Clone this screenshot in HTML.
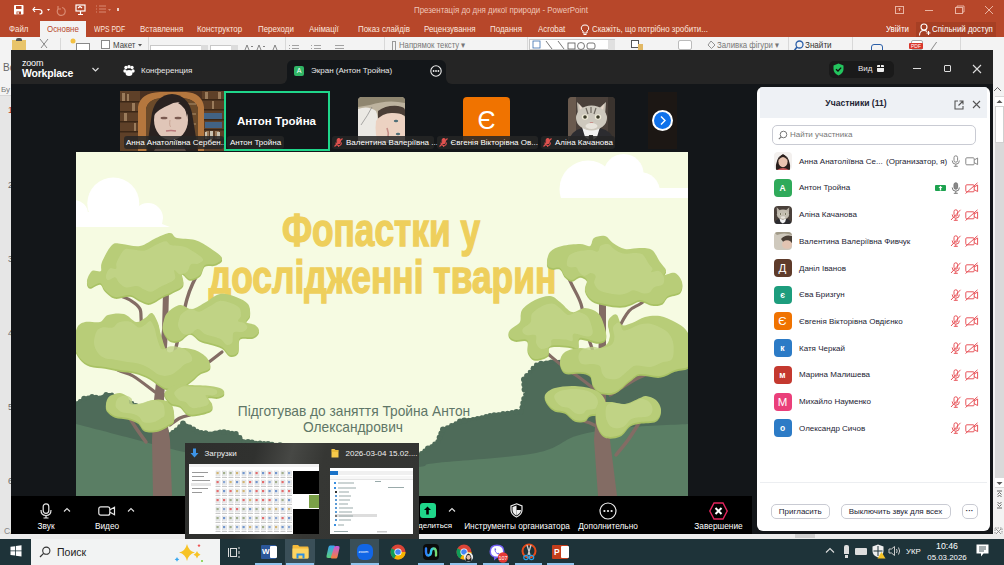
<!DOCTYPE html>
<html><head><meta charset="utf-8">
<style>
*{margin:0;padding:0;box-sizing:border-box}
html,body{width:1004px;height:565px;overflow:hidden;background:#f3f3f3;font-family:"Liberation Sans",sans-serif;position:relative}
.a{position:absolute}
.t{position:absolute;white-space:nowrap;line-height:1}
svg{position:absolute;overflow:visible}
.tab{position:absolute;top:24.5px;font-size:9px;transform:scaleX(.88);transform-origin:0 0;color:#fbe6df;white-space:nowrap;line-height:1}
.rb{position:absolute;top:43px;font-size:8.5px;color:#555;white-space:nowrap;line-height:1}
.pn{position:absolute;left:8px;font-size:9px;color:#666;line-height:1}
.tn{position:absolute;font-size:8.3px;color:#fff;white-space:nowrap;line-height:1}
.lbl{position:absolute;height:12.5px;background:rgba(38,38,38,.85);border-radius:3px;color:#fff;font-size:8px;line-height:14px;padding:0 3px;white-space:nowrap}
.pr{position:absolute;left:0;width:233px;height:27px}
.pr .av{position:absolute;left:16px;top:5px;width:18px;height:18px;border-radius:4px;color:#fff;font-size:9px;font-weight:bold;text-align:center;line-height:18px}
.pr .nm{position:absolute;left:42px;top:9px;font-size:8.2px;color:#222;white-space:nowrap;line-height:1}
.tbl{position:absolute;top:472px;font-size:8.3px;color:#fff;white-space:nowrap;line-height:1;transform:translateX(-50%)}
.ul{position:absolute;top:563px;height:2px;background:#8fc3ec}
</style></head><body>
<!-- ===== PowerPoint chrome ===== -->
<div class="a" style="left:0;top:0;width:1004px;height:37px;background:#b7472a"></div>
<div class="a" style="left:40px;top:21px;width:46px;height:17px;background:#f3f3f3"></div>
<div class="tab" style="left:9px">Файл</div>
<div class="tab" style="left:47px;color:#b7472a">Основне</div>
<div class="tab" style="left:94px;transform:scaleX(.76)">WPS PDF</div>
<div class="tab" style="left:140px">Вставлення</div>
<div class="tab" style="left:197px">Конструктор</div>
<div class="tab" style="left:258px">Переходи</div>
<div class="tab" style="left:309px">Анімації</div>
<div class="tab" style="left:358px">Показ слайдів</div>
<div class="tab" style="left:424px">Рецензування</div>
<div class="tab" style="left:490px">Подання</div>
<div class="tab" style="left:538px">Acrobat</div>
<div class="tab" style="left:592px">Скажіть, що потрібно зробити...</div>
<div class="tab" style="left:886px;color:#fff">Увійти</div>
<div class="a" style="left:916px;top:22px;width:80px;height:15px;background:#a63f24"></div>
<div class="tab" style="left:932px;color:#fff">Спільний доступ</div>
<div class="t" style="left:414px;top:5.5px;font-size:9px;color:#f0c6b8;transform:scaleX(.88);transform-origin:0 0">Презентація до дня дикої природи - PowerPoint</div>
<!-- QAT icons -->
<svg style="left:0;top:0" width="120" height="20">
 <g fill="none" stroke="#fff" stroke-width="1.2">
  
  <path d="M35 7 L33 9.5 L35 12 M33.2 9.5 H39 Q42 9.5 42 12 Q42 14 39.5 14"/>
  <path d="M62 7.5 A4 4 0 1 1 58.5 8.5 M58 6 V9 H61" stroke="#d98a72"/>
  <rect x="76" y="5" width="9" height="6"/><path d="M80.5 11 V14 M78 14.5 H83 M78 8 L80 6.5 L82 8"/>
  <path d="M96 6h1M96 9h1M96 12h1M99 6h7M99 9h7M99 12h7" stroke="#d98a72"/>
 </g>
 <path d="M47 9 L50 9 L48.5 11 Z" fill="#fff"/><rect x="14" y="5" width="9.5" height="9.5" rx=".8" fill="#fff"/><rect x="16" y="6" width="5.5" height="3" fill="#b7472a"/><rect x="16.5" y="11.5" width="4.5" height="3" fill="#b7472a"/><rect x="17.5" y="12" width="1.2" height="2" fill="#fff"/>
 <path d="M108 9 L111 9 L109.5 11 Z" fill="#d98a72"/>
 <path d="M118 8 v3" stroke="#fff" stroke-width="1.5"/>
</svg>
<!-- lightbulb -->
<svg style="left:580px;top:24px" width="10" height="12"><g fill="none" stroke="#fff" stroke-width="1"><path d="M5 1 A3.2 3.2 0 0 1 7 7 V9 H3 V7 A3.2 3.2 0 0 1 5 1Z"/><path d="M3.5 10.5 H6.5"/></g></svg>
<!-- person icon -->
<svg style="left:919px;top:23px" width="12" height="13"><g fill="none" stroke="#fff" stroke-width="1.1"><circle cx="5" cy="4" r="3"/><path d="M0.5 12.5 Q0.5 7.5 5 7.5 Q7 7.5 8 8.5 M9.5 8 V12 M7.5 10 H11.5"/></g></svg>
<!-- title bar window buttons -->
<svg style="left:890px;top:2px" width="110" height="16"><g fill="none" stroke="#e9b3a2" stroke-width="1"><rect x="5.5" y="4.5" width="8" height="7"/><path d="M9.5 6 v3 M8 7.5 L9.5 6 L11 7.5"/><path d="M35 8.5 h8"/><rect x="65.5" y="5.5" width="7" height="6"/><path d="M67 5.5 v-1.5 h7 v6 h-1.5"/><path d="M95 4 l8 8 M103 4 l-8 8"/></g></svg>
<!-- ribbon strip -->
<div class="a" style="left:0;top:37px;width:1004px;height:13px;background:#f3f3f3"></div>
<div class="a" style="left:12px;top:40px;width:14px;height:10px;background:#e8c46a"></div>
<div class="a" style="left:16px;top:38px;width:6px;height:3px;background:#555;border-radius:2px 2px 0 0"></div>
<svg style="left:38px;top:38px" width="12" height="12"><path d="M2 1 L9 10 M10 1 L3 10" stroke="#888" stroke-width="1" fill="none"/></svg>
<div class="a" style="left:60px;top:38px;width:1px;height:12px;background:#d8d8d8"></div>
<svg style="left:68px;top:37px" width="24" height="13"><circle cx="5" cy="4" r="2.5" fill="#f3c040"/><rect x="8.5" y="6.5" width="13" height="7" fill="#fff" stroke="#888"/></svg>
<div class="a" style="left:101px;top:40px;width:9px;height:9px;border:1px solid #888;background:#fff"></div>
<div class="rb" style="left:113px;top:41px;color:#444;font-size:9px;transform:scaleX(.88);transform-origin:0 0">Макет</div><svg style="left:138px;top:44px" width="5" height="4"><path d="M0 0 H4 L2 2.5Z" fill="#555"/></svg>
<div class="a" style="left:148px;top:37px;width:1px;height:13px;background:#d8d8d8"></div>
<div class="a" style="left:150px;top:45px;width:58px;height:6px;background:#fff;border:1px solid #c8c8c8"></div>
<div class="a" style="left:201px;top:45px;width:7px;height:6px;background:#dcdcdc"></div>
<div class="a" style="left:209.5px;top:45px;width:28px;height:6px;background:#fff;border:1px solid #c8c8c8"></div>
<div class="a" style="left:230.5px;top:45px;width:7px;height:6px;background:#dcdcdc"></div>
<svg style="left:244px;top:44px" width="40" height="7"><g fill="none" stroke="#777" stroke-width=".9"><path d="M1 6 L3 1 L5 6 M7 3 L8 2 L9 3"/><path d="M13 6 L15 1 L17 6 M19 2 L20 3 L21 2"/><path d="M29 6 L31 1 L33 6"/></g></svg>
<div class="a" style="left:285px;top:37px;width:1px;height:13px;background:#d8d8d8"></div>
<svg style="left:288px;top:44px" width="60" height="7"><g fill="none" stroke="#999" stroke-width=".9"><path d="M1 1.5 h1 M4 1.5 h7 M1 4.5 h1 M4 4.5 h7"/><path d="M23 1.5 h1 M26 1.5 h7 M23 4.5 h1 M26 4.5 h7"/><path d="M47 1.5 h9 M47 4.5 h9"/></g></svg>
<div class="a" style="left:384px;top:37px;width:1px;height:13px;background:#d8d8d8"></div>
<div class="a" style="left:392px;top:41px;width:4px;height:9px;border:1px solid #999;border-bottom:none"></div><div class="rb" style="left:399px;top:41px;color:#777;font-size:8.6px;transform:scaleX(.9);transform-origin:0 0">Напрямок тексту ▾</div>
<div class="a" style="left:527px;top:37px;width:1px;height:13px;background:#d8d8d8"></div>
<div class="a" style="left:529px;top:39px;width:86px;height:11px;background:#fff;border:1px solid #c8c8c8"></div>
<svg style="left:532px;top:40px" width="80" height="10"><g fill="none" stroke="#555" stroke-width=".8"><rect x="1" y="1" width="7" height="7" stroke="#3a6fb0"/><path d="M14 1 L20 9 M26 1 L32 9"/><rect x="36" y="3" width="7" height="6"/><circle cx="49" cy="6" r="3.5"/><rect x="55" y="3" width="8" height="6" rx="2"/></g></svg>
<div class="a" style="left:608px;top:40px;width:7px;height:10px;background:#e0e0e0"></div>
<div class="a" style="left:631px;top:40px;width:8px;height:8px;border:1px solid #555;background:#fff"></div>
<div class="a" style="left:638px;top:44px;width:5px;height:6px;background:#e1b866"></div>
<div class="a" style="left:678px;top:40px;width:14px;height:10px;border:1px solid #bbb;border-radius:2px;background:#fff"></div>
<svg style="left:707px;top:40px" width="9" height="10"><path d="M4 1 L8 5 L4.5 8.5 L1 5Z" fill="none" stroke="#888" stroke-width=".9"/></svg><div class="rb" style="left:717px;top:41px;color:#777;font-size:9px;transform:scaleX(.87);transform-origin:0 0">Заливка фігури ▾</div>
<div class="a" style="left:788px;top:37px;width:1px;height:13px;background:#d8d8d8"></div>
<svg style="left:793px;top:40px" width="12" height="12"><circle cx="6.5" cy="4.5" r="3.5" fill="none" stroke="#2b5fa8" stroke-width="1.3"/><path d="M4 7 L1 11" stroke="#2b5fa8" stroke-width="1.5"/></svg>
<div class="rb" style="left:805px;top:41px;color:#333;font-size:9px;transform:scaleX(.9);transform-origin:0 0">Знайти</div>
<div class="a" style="left:852px;top:37px;width:1px;height:13px;background:#d8d8d8"></div>
<div class="a" style="left:871px;top:44px;width:12px;height:7px;border:1px solid #2b5fa8;border-radius:3px 3px 0 0"></div>
<div class="a" style="left:911px;top:40px;width:12px;height:10px;border:1px solid #aaa;border-radius:2px;background:#fff"></div><div class="a" style="left:909px;top:43px;width:14px;height:6px;background:#d9372c;border-radius:1px;color:#fff;font-size:5px;line-height:6px;text-align:center">PDF</div>
<div class="a" style="left:933px;top:42px;width:12px;height:9px;border-left:1px solid #888;transform:skewX(-35deg)"></div>
<div class="a" style="left:960px;top:37px;width:1px;height:13px;background:#d8d8d8"></div>
<!-- left strip -->
<div class="a" style="left:0;top:95px;width:11px;height:439px;background:#e6e6e6"></div>
<div class="a" style="left:0;top:95px;width:11px;height:1px;background:#d6d6d6"></div>
<div class="t" style="left:3px;top:63px;font-size:10px;color:#666">Во</div>
<div class="t" style="left:1px;top:86px;font-size:8px;color:#777">Бу</div>
<div class="pn" style="top:106px;color:#c43e1c">1</div>
<div class="pn" style="top:181px">2</div>
<div class="pn" style="top:255px">3</div>
<div class="pn" style="top:329px">4</div>
<div class="pn" style="top:403px">5</div>
<div class="pn" style="top:477px">6</div>
<!-- right strip -->
<div class="a" style="left:993px;top:50px;width:11px;height:484px;background:#f3f3f3"></div>
<div class="a" style="left:995px;top:96px;width:9px;height:392px;background:#d9d9d9"></div>
<div class="a" style="left:995px;top:97px;width:9px;height:9px;background:#fff"></div>
<svg style="left:996px;top:99px" width="7" height="5"><path d="M0.5 4 L3.5 1 L6.5 4Z" fill="#555"/></svg>
<div class="a" style="left:995px;top:106px;width:9px;height:37px;background:#fff;border:1px solid #d0d0d0"></div>
<svg style="left:993px;top:86px" width="9" height="6"><path d="M1 5 L4.5 1.5 L8 5" fill="none" stroke="#666" stroke-width="1"/></svg>
<div class="a" style="left:995px;top:478px;width:9px;height:9px;background:#fff"></div>
<svg style="left:996px;top:481px" width="7" height="5"><path d="M0.5 1 L3.5 4 L6.5 1Z" fill="#555"/></svg>
<svg style="left:996px;top:490px" width="7" height="8"><path d="M1 1 H6 M1.5 4.5 L3.5 2.5 L5.5 4.5 M1.5 7 L3.5 5 L5.5 7" fill="none" stroke="#555" stroke-width=".9"/></svg>
<svg style="left:996px;top:501px" width="7" height="8"><path d="M1.5 1 L3.5 3 L5.5 1 M1.5 3.5 L3.5 5.5 L5.5 3.5 M1 7 H6" fill="none" stroke="#555" stroke-width=".9"/></svg>
<svg style="left:994px;top:527px" width="9" height="9"><g fill="none" stroke="#888" stroke-width=".9"><rect x="1" y="1" width="7" height="7" stroke-dasharray="1.5 1"/><path d="M2 2 L7 7 M7 2 L2 7"/></g></svg>
<!-- status bar -->
<div class="a" style="left:0;top:534px;width:1004px;height:5px;background:#ececec"></div><div class="a" style="left:795px;top:534px;width:20px;height:4px;background:#cfcfcf"></div>
<div class="t" style="left:4px;top:527px;font-size:8.5px;color:#888">Сл</div>
<!-- ===== Zoom window ===== -->
<div class="a" style="left:11px;top:50px;width:982px;height:484px;background:#131619;overflow:hidden">
 <div class="a" style="left:0;top:0;width:982px;height:34px;background:#252525"></div>
 <!-- tab -->
 <div class="a" style="left:276px;top:10px;width:159px;height:24px;background:#131619;border-radius:6px 6px 0 0"></div>
 <div class="a" style="left:270px;top:28px;width:6px;height:6px;background:#131619"></div>
 <div class="a" style="left:264px;top:22px;width:12px;height:12px;background:#252525;border-radius:0 0 6px 0"></div>
 <div class="a" style="left:435px;top:28px;width:6px;height:6px;background:#131619"></div>
 <div class="a" style="left:435px;top:22px;width:12px;height:12px;background:#252525;border-radius:0 0 0 6px"></div>
 <!-- logo -->
 <div class="t" style="left:11px;top:9px;font-size:9px;color:#fff;letter-spacing:-.2px">zoom</div>
 <div class="t" style="left:11px;top:18px;font-size:10.5px;color:#fff;font-weight:bold;letter-spacing:-.2px">Workplace</div>
 <svg style="left:80px;top:16px" width="10" height="8"><path d="M1.5 2 L4.5 5 L7.5 2" fill="none" stroke="#ddd" stroke-width="1.2"/></svg>
 <svg style="left:112px;top:15px" width="12" height="12"><g fill="#fff"><circle cx="3" cy="2.5" r="1.7"/><circle cx="6" cy="1.8" r="1.7"/><circle cx="9" cy="2.5" r="1.7"/><circle cx="2" cy="6" r="1.7"/><circle cx="10" cy="6" r="1.7"/><ellipse cx="6" cy="8" rx="3.5" ry="3"/></g></svg>
 <div class="t" style="left:130px;top:17px;font-size:8px;color:#e8e8e8">Конференция</div>
 <div class="a" style="left:283px;top:16px;width:10px;height:10px;background:#30b566;border-radius:2px;color:#fff;font-size:7px;line-height:10px;text-align:center">A</div>
 <div class="t" style="left:300px;top:17px;font-size:8px;color:#e8e8e8">Экран (Антон Тройна)</div>
 <svg style="left:419px;top:15px" width="12" height="12"><circle cx="6" cy="6" r="5.2" fill="none" stroke="#eee" stroke-width="1.1"/><g fill="#eee"><circle cx="3.6" cy="6" r=".9"/><circle cx="6" cy="6" r=".9"/><circle cx="8.4" cy="6" r=".9"/></g></svg>
 <!-- right header -->
 <div class="a" style="left:818px;top:11px;width:65px;height:17px;background:#1a1a1a;border-radius:5px"></div>
 <svg style="left:822px;top:13px" width="12" height="13"><path d="M5.5 0.5 L10.5 2.5 V6 Q10.5 10 5.5 12.5 Q0.5 10 0.5 6 V2.5 Z" fill="#23c55e"/><path d="M3 6.2 L5 8 L8.2 4.6" fill="none" stroke="#111" stroke-width="1.3"/></svg>
 <div class="t" style="left:847px;top:15px;font-size:8px;color:#e8e8e8">Вид</div>
 <div class="a" style="left:866px;top:15px;width:7px;height:7px;background:#eee;border-radius:1px"></div>
 <div class="a" style="left:866px;top:17px;width:7px;height:1px;background:#1a1a1a"></div>
 <div class="a" style="left:868.5px;top:15px;width:1px;height:2px;background:#1a1a1a"></div>
 <div class="a" style="left:902px;top:18px;width:8px;height:1px;background:#ddd"></div>
 <div class="a" style="left:933px;top:15px;width:7px;height:7px;border:1px solid #ddd;border-radius:1px"></div>
 <svg style="left:961px;top:14px" width="10" height="10"><path d="M1 1 L9 9 M9 1 L1 9" stroke="#ddd" stroke-width="1.1"/></svg>
 <!-- thumbnails -->
 <!-- Anna -->
 <div class="a" style="left:109px;top:41px;width:104px;height:60px;overflow:hidden;background:#6b4a2e">
  <svg style="left:0;top:0" width="104" height="60">
   <rect width="104" height="60" fill="#4a3020"/>
   <g fill="#5e4028"><rect x="0" y="0" width="20" height="60"/><rect x="82" y="0" width="22" height="60"/></g>
   <g fill="#3a2616"><rect x="0" y="10" width="20" height="1.5"/><rect x="0" y="20" width="20" height="1.5"/><rect x="0" y="30" width="20" height="1.5"/><rect x="0" y="40" width="20" height="1.5"/><rect x="82" y="8" width="22" height="1.5"/><rect x="82" y="18" width="22" height="1.5"/><rect x="82" y="28" width="22" height="1.5"/><rect x="82" y="38" width="22" height="1.5"/><rect x="82" y="48" width="22" height="1.5"/></g>
   <g fill="#a98a68" opacity=".8"><rect x="2" y="2" width="3" height="8"/><rect x="7" y="3" width="2" height="7"/><rect x="12" y="12" width="3" height="8"/><rect x="4" y="22" width="3" height="8"/><rect x="14" y="32" width="2" height="8"/><rect x="85" y="1" width="3" height="7"/><rect x="92" y="10" width="2" height="8"/><rect x="98" y="1" width="3" height="7"/><rect x="86" y="40" width="3" height="8"/><rect x="95" y="40" width="4" height="8"/></g>
   <g fill="#c9c2b0"><rect x="85" y="41" width="2" height="7"/><rect x="90" y="40" width="3" height="8"/><rect x="97" y="41" width="3" height="7"/></g>
   <g fill="#3f6790" opacity=".9"><rect x="84" y="22" width="18" height="6"/><rect x="85" y="31" width="17" height="6"/></g>
   <path d="M18 60 V16 Q20 2 40 1 L66 1 Q82 2 84 16 V60 H78 V18 Q76 8 62 7 H42 Q28 8 26 18 V60Z" fill="#b5773e"/>
   <path d="M26 60 V18 Q28 8 42 7 H62 Q76 8 78 18 V60Z" fill="#6b4a2a"/>
   <g fill="#9b7c5a" opacity=".7"><rect x="62" y="12" width="14" height="2"/><rect x="62" y="22" width="14" height="2"/><rect x="62" y="32" width="14" height="2"/></g>
   <path d="M27 60 Q29 40 32 22 Q36 4 52 3 Q68 4 72 22 Q75 40 78 60Z" fill="#2a2220"/>
   <ellipse cx="51" cy="29" rx="17" ry="20" fill="#e0c6b8"/>
   <path d="M34 24 Q35 8 51 7 Q59 7 63 12 Q55 10 49 14 Q39 18 34 24Z" fill="#2a2220"/>
   <path d="M62 12 Q68 16 67 26 Q66 16 58 12Z" fill="#2a2220"/>
   <g fill="#7a5a50"><ellipse cx="44" cy="27" rx="3.5" ry="1.3"/><ellipse cx="58" cy="27" rx="3.5" ry="1.3"/></g>
   <path d="M46 40 Q51 39 56 40" stroke="#b8787a" stroke-width="1.3" fill="none"/>
   <path d="M50 29 Q49 35 51 36" stroke="#c9a696" stroke-width="1" fill="none"/>
   <path d="M34 60 Q38 50 50 49 Q62 50 66 60Z" fill="#5a4a44"/>
  </svg>
 </div>
 <div class="lbl" style="left:113px;top:86px;width:100px;padding-left:2px">Анна Анатоліївна Сербен...</div>
 <!-- Anton -->
 <div class="a" style="left:213px;top:41px;width:106px;height:60px;border:2px solid #1fd68a;background:#131619"></div>
 <div class="t" style="left:265.5px;top:66px;font-size:11.5px;font-weight:bold;color:#fff;transform:translateX(-50%)">Антон Тройна</div>
 <div class="lbl" style="left:216px;top:86px">Антон Тройна</div>
 <!-- Valentyna -->
 <div class="a" style="left:347px;top:47px;width:47px;height:46px;overflow:hidden;border-radius:4px">
  <svg width="47" height="46"><rect width="47" height="46" fill="#bdb39f"/>
  <path d="M0 0 H47 V6 Q30 2 12 8 L0 10Z" fill="#8f8670"/>
  <path d="M0 12 Q10 8 18 14 Q22 24 18 46 H0Z" fill="#ebe9e4"/>
  <path d="M3 28 Q10 18 14 10" stroke="#777" stroke-width=".6" fill="none"/>
  <path d="M20 14 Q28 8 40 9 Q47 10 47 13 V19 Q40 15 30 17 Q24 19 20 22Z" fill="#4a3e36"/>
  <path d="M18 24 Q24 16 34 16 Q47 16 47 22 V46 H22 Q16 40 18 24Z" fill="#ecd2c2"/>
  <ellipse cx="38" cy="24" rx="2.2" ry="1.3" fill="#4f6f78"/><ellipse cx="40" cy="37" rx="2.2" ry="1.3" fill="#4f6f78"/>
  <path d="M29 31 Q31 36 30 40" stroke="#c48d86" stroke-width="1.6" fill="none"/>
  </svg>
 </div>
 <div class="lbl" style="left:321px;top:86px;width:102px;padding-left:14px">Валентина Валеріївна ...</div>
 <!-- Yevheniia -->
 <div class="a" style="left:452px;top:47px;width:47px;height:46px;background:#f07300;border-radius:4px;color:#fff;font-size:25px;text-align:center;line-height:46px">Є</div>
 <div class="lbl" style="left:425.5px;top:86px;width:101.5px;padding-left:14px">Євгенія Вікторівна Ов...</div>
 <!-- Alina (cat) -->
 <div class="a" style="left:557px;top:47px;width:47px;height:46px;overflow:hidden;border-radius:4px">
  <svg width="47" height="46"><rect width="47" height="46" fill="#4a403a"/><rect x="0" y="0" width="8" height="46" fill="#6a5a4e"/><rect x="40" y="0" width="7" height="46" fill="#3a332e"/>
  <path d="M0 46 Q2 34 14 31 L23 38 L32 31 Q45 34 47 46Z" fill="#2c2c30"/>
  <path d="M14 30 Q23 36 32 30 L29 40 L23 44 L17 40Z" fill="#f2f2f2"/>
  <path d="M21 38 L25 38 L26 46 L20 46Z" fill="#333"/>
  <path d="M9 5 L17 13 L29 13 L38 5 L37 19 L10 19Z" fill="#c4beb2"/>
  <path d="M11 7 L15 12 L12 14Z M36 7 L32 12 L35 14Z" fill="#e8d8cc"/>
  <ellipse cx="23.5" cy="21" rx="15.5" ry="12.5" fill="#cdc8bd"/>
  <path d="M18 11 L20 17 M23 10 L23 16 M28 11 L26 17" stroke="#6d675e" stroke-width="1.2"/>
  <ellipse cx="17" cy="20" rx="3.2" ry="2.8" fill="#f0ecd8"/><ellipse cx="30" cy="20" rx="3.2" ry="2.8" fill="#f0ecd8"/>
  <circle cx="17" cy="20" r="1.8" fill="#3b3a28"/><circle cx="30" cy="20" r="1.8" fill="#3b3a28"/>
  <path d="M21.5 25 L25.5 25 L23.5 27.5Z" fill="#c9908a"/>
  <ellipse cx="23.5" cy="29" rx="6" ry="3" fill="#e8e4dc"/>
  </svg>
 </div>
 <div class="lbl" style="left:530px;top:86px;width:74px;padding-left:14px">Аліна Качанова</div>
 <!-- mute icons on labels -->
 <svg style="left:323px;top:88px" width="10" height="9"><g stroke="#e0524f" stroke-width="1.1" fill="none"><rect x="3.2" y="0.6" width="3" height="5" rx="1.5" fill="#e0524f"/><path d="M2 4.5 Q2 7.5 4.7 7.5 Q7.4 7.5 7.4 4.5 M4.7 7.5 V9"/><path d="M0.5 8.5 L8.5 0.5"/></g></svg>
 <svg style="left:427.5px;top:88px" width="10" height="9"><g stroke="#e0524f" stroke-width="1.1" fill="none"><rect x="3.2" y="0.6" width="3" height="5" rx="1.5" fill="#e0524f"/><path d="M2 4.5 Q2 7.5 4.7 7.5 Q7.4 7.5 7.4 4.5 M4.7 7.5 V9"/><path d="M0.5 8.5 L8.5 0.5"/></g></svg>
 <svg style="left:532px;top:88px" width="10" height="9"><g stroke="#e0524f" stroke-width="1.1" fill="none"><rect x="3.2" y="0.6" width="3" height="5" rx="1.5" fill="#e0524f"/><path d="M2 4.5 Q2 7.5 4.7 7.5 Q7.4 7.5 7.4 4.5 M4.7 7.5 V9"/><path d="M0.5 8.5 L8.5 0.5"/></g></svg>
 <!-- next button -->
 <div class="a" style="left:637px;top:42px;width:29px;height:57px;background:#1c1714"></div>
 <div class="a" style="left:641px;top:60px;width:21px;height:21px;border-radius:50%;background:#fff"></div>
 <div class="a" style="left:643px;top:62px;width:17px;height:17px;border-radius:50%;background:#0e71eb"></div>
 <svg style="left:647px;top:65px" width="10" height="11"><path d="M3 1.5 L7 5.5 L3 9.5" fill="none" stroke="#fff" stroke-width="1.4"/></svg>
<svg style="left:65px;top:102px;overflow:hidden" width="612" height="344" viewBox="0 0 612 344">
<rect width="612" height="344" fill="#f6fbe2"/>
<defs><clipPath id="cl1"><rect x="0" y="0" width="200" height="75"/></clipPath><clipPath id="cr1"><rect x="450" y="0" width="200" height="46"/></clipPath></defs>
<g fill="#fff" clip-path="url(#cl1)"><circle cx="37.3" cy="51.5" r="26"/><circle cx="72" cy="66" r="15"/><circle cx="-2" cy="62" r="14"/><rect x="0" y="60" width="80" height="15"/><path d="M80 60 L86 72 L94 75 L60 75Z"/></g>
<g fill="#fff" clip-path="url(#cr1)"><circle cx="512" cy="37" r="28.5"/><circle cx="547.6" cy="22" r="20"/><circle cx="564" cy="40" r="20"/><circle cx="604" cy="48" r="10"/><rect x="512" y="36" width="100" height="10"/></g>
<g font-family="Liberation Sans" font-weight="bold" font-size="46" fill="#eecf5c" stroke="#eecf5c" stroke-width="1.4" text-anchor="middle">
<text x="0" y="0" transform="translate(305 94) scale(0.767 1)">Фопастки у</text>
<text x="0" y="0" transform="translate(306.5 140.5) scale(0.769 1)">дослідженні тварин</text>
</g>
<path d="M0 250 L8 245 L16 243 L24 244 L30 241 L36 241 L42 244 L49 246 L56 250 L74 263 L93 281 L100 276 L107 270 L114 273 L121 278 L134 280 L144 278 L160 280 L168 288 L224 294 L304 298 L342 302 L362 288 L367 276 L384 268 L410 263 L418 261 L445 258 L449 241 L448 226 L460 211 L475 208 L524 210 L564 216 L591 221 L612 213 L612 344 L0 344Z" fill="#4e6b59"/>
<g fill="#4e6b59"><circle cx="0.0" cy="251.5" r="2.3"/><circle cx="4.0" cy="249.0" r="2.0"/><circle cx="8.0" cy="246.5" r="2.7"/><circle cx="12.0" cy="245.5" r="1.9"/><circle cx="16.0" cy="244.5" r="2.6"/><circle cx="20.0" cy="245.0" r="2.3"/><circle cx="24.0" cy="245.5" r="1.9"/><circle cx="30.0" cy="242.5" r="2.5"/><circle cx="36.0" cy="242.5" r="1.9"/><circle cx="42.0" cy="245.5" r="2.4"/><circle cx="49.0" cy="247.5" r="1.9"/><circle cx="52.5" cy="249.5" r="1.9"/><circle cx="56.0" cy="251.5" r="2.4"/><circle cx="59.6" cy="254.1" r="3.0"/><circle cx="63.2" cy="256.7" r="2.0"/><circle cx="66.8" cy="259.3" r="2.1"/><circle cx="70.4" cy="261.9" r="2.7"/><circle cx="74.0" cy="264.5" r="3.1"/><circle cx="77.2" cy="267.5" r="2.6"/><circle cx="80.3" cy="270.5" r="2.4"/><circle cx="83.5" cy="273.5" r="3.2"/><circle cx="86.7" cy="276.5" r="1.9"/><circle cx="89.8" cy="279.5" r="3.0"/><circle cx="93.0" cy="282.5" r="2.2"/><circle cx="96.5" cy="280.0" r="2.0"/><circle cx="100.0" cy="277.5" r="2.0"/><circle cx="103.5" cy="274.5" r="2.2"/><circle cx="107.0" cy="271.5" r="2.9"/><circle cx="114.0" cy="274.5" r="2.1"/><circle cx="117.5" cy="277.0" r="2.6"/><circle cx="121.0" cy="279.5" r="2.7"/><circle cx="125.3" cy="280.2" r="2.3"/><circle cx="129.7" cy="280.8" r="2.6"/><circle cx="134.0" cy="281.5" r="1.9"/><circle cx="139.0" cy="280.5" r="1.9"/><circle cx="144.0" cy="279.5" r="2.1"/><circle cx="148.0" cy="280.0" r="2.8"/><circle cx="152.0" cy="280.5" r="2.4"/><circle cx="156.0" cy="281.0" r="2.2"/><circle cx="160.0" cy="281.5" r="2.6"/><circle cx="164.0" cy="285.5" r="2.4"/><circle cx="168.0" cy="289.5" r="2.2"/><circle cx="172.0" cy="289.9" r="2.9"/><circle cx="176.0" cy="290.4" r="2.8"/><circle cx="180.0" cy="290.8" r="2.1"/><circle cx="184.0" cy="291.2" r="2.6"/><circle cx="188.0" cy="291.6" r="2.5"/><circle cx="192.0" cy="292.1" r="3.0"/><circle cx="196.0" cy="292.5" r="2.8"/><circle cx="200.0" cy="292.9" r="2.2"/><circle cx="204.0" cy="293.4" r="3.2"/><circle cx="208.0" cy="293.8" r="2.0"/><circle cx="212.0" cy="294.2" r="2.4"/><circle cx="216.0" cy="294.6" r="2.9"/><circle cx="220.0" cy="295.1" r="2.0"/><circle cx="224.0" cy="295.5" r="2.5"/><circle cx="228.0" cy="295.7" r="1.9"/><circle cx="232.0" cy="295.9" r="2.7"/><circle cx="236.0" cy="296.1" r="2.9"/><circle cx="240.0" cy="296.3" r="2.6"/><circle cx="244.0" cy="296.5" r="3.0"/><circle cx="248.0" cy="296.7" r="2.2"/><circle cx="252.0" cy="296.9" r="2.8"/><circle cx="256.0" cy="297.1" r="2.6"/><circle cx="260.0" cy="297.3" r="2.6"/><circle cx="264.0" cy="297.5" r="2.4"/><circle cx="268.0" cy="297.7" r="3.0"/><circle cx="272.0" cy="297.9" r="3.1"/><circle cx="276.0" cy="298.1" r="2.5"/><circle cx="280.0" cy="298.3" r="2.7"/><circle cx="284.0" cy="298.5" r="1.9"/><circle cx="288.0" cy="298.7" r="2.8"/><circle cx="292.0" cy="298.9" r="2.7"/><circle cx="296.0" cy="299.1" r="3.2"/><circle cx="300.0" cy="299.3" r="3.0"/><circle cx="304.0" cy="299.5" r="2.2"/><circle cx="308.2" cy="299.9" r="2.3"/><circle cx="312.4" cy="300.4" r="2.7"/><circle cx="316.7" cy="300.8" r="1.8"/><circle cx="320.9" cy="301.3" r="2.4"/><circle cx="325.1" cy="301.7" r="2.0"/><circle cx="329.3" cy="302.2" r="2.0"/><circle cx="333.6" cy="302.6" r="1.9"/><circle cx="337.8" cy="303.1" r="2.9"/><circle cx="342.0" cy="303.5" r="2.0"/><circle cx="345.3" cy="301.2" r="2.1"/><circle cx="348.7" cy="298.8" r="2.3"/><circle cx="352.0" cy="296.5" r="3.0"/><circle cx="355.3" cy="294.2" r="1.9"/><circle cx="358.7" cy="291.8" r="2.4"/><circle cx="362.0" cy="289.5" r="2.6"/><circle cx="363.7" cy="285.5" r="3.0"/><circle cx="365.3" cy="281.5" r="2.9"/><circle cx="367.0" cy="277.5" r="3.0"/><circle cx="371.2" cy="275.5" r="2.2"/><circle cx="375.5" cy="273.5" r="2.4"/><circle cx="379.8" cy="271.5" r="2.3"/><circle cx="384.0" cy="269.5" r="3.0"/><circle cx="388.3" cy="268.7" r="3.1"/><circle cx="392.7" cy="267.8" r="2.0"/><circle cx="397.0" cy="267.0" r="2.0"/><circle cx="401.3" cy="266.2" r="2.1"/><circle cx="405.7" cy="265.3" r="2.1"/><circle cx="410.0" cy="264.5" r="2.5"/><circle cx="414.0" cy="263.5" r="2.6"/><circle cx="418.0" cy="262.5" r="2.2"/><circle cx="422.5" cy="262.0" r="1.8"/><circle cx="427.0" cy="261.5" r="2.4"/><circle cx="431.5" cy="261.0" r="2.3"/><circle cx="436.0" cy="260.5" r="2.6"/><circle cx="440.5" cy="260.0" r="3.1"/><circle cx="445.0" cy="259.5" r="2.8"/><circle cx="446.0" cy="255.2" r="2.5"/><circle cx="447.0" cy="251.0" r="2.7"/><circle cx="448.0" cy="246.8" r="2.7"/><circle cx="449.0" cy="242.5" r="1.9"/><circle cx="448.7" cy="237.5" r="3.1"/><circle cx="448.3" cy="232.5" r="2.9"/><circle cx="448.0" cy="227.5" r="3.0"/><circle cx="451.0" cy="223.8" r="2.9"/><circle cx="454.0" cy="220.0" r="2.3"/><circle cx="457.0" cy="216.2" r="2.4"/><circle cx="460.0" cy="212.5" r="1.9"/><circle cx="465.0" cy="211.5" r="2.7"/><circle cx="470.0" cy="210.5" r="1.9"/><circle cx="475.0" cy="209.5" r="1.9"/><circle cx="479.1" cy="209.7" r="2.1"/><circle cx="483.2" cy="209.8" r="2.0"/><circle cx="487.2" cy="210.0" r="2.3"/><circle cx="491.3" cy="210.2" r="1.9"/><circle cx="495.4" cy="210.3" r="1.8"/><circle cx="499.5" cy="210.5" r="2.0"/><circle cx="503.6" cy="210.7" r="1.9"/><circle cx="507.7" cy="210.8" r="2.3"/><circle cx="511.8" cy="211.0" r="1.8"/><circle cx="515.8" cy="211.2" r="3.0"/><circle cx="519.9" cy="211.3" r="2.7"/><circle cx="524.0" cy="211.5" r="2.0"/><circle cx="528.0" cy="212.1" r="2.2"/><circle cx="532.0" cy="212.7" r="2.3"/><circle cx="536.0" cy="213.3" r="2.3"/><circle cx="540.0" cy="213.9" r="2.0"/><circle cx="544.0" cy="214.5" r="3.0"/><circle cx="548.0" cy="215.1" r="3.2"/><circle cx="552.0" cy="215.7" r="2.5"/><circle cx="556.0" cy="216.3" r="2.5"/><circle cx="560.0" cy="216.9" r="1.9"/><circle cx="564.0" cy="217.5" r="1.9"/><circle cx="568.5" cy="218.3" r="2.3"/><circle cx="573.0" cy="219.2" r="2.2"/><circle cx="577.5" cy="220.0" r="3.0"/><circle cx="582.0" cy="220.8" r="2.0"/><circle cx="586.5" cy="221.7" r="1.8"/><circle cx="591.0" cy="222.5" r="3.1"/><circle cx="595.2" cy="220.9" r="2.5"/><circle cx="599.4" cy="219.3" r="2.0"/><circle cx="603.6" cy="217.7" r="2.6"/><circle cx="607.8" cy="216.1" r="1.8"/></g>
<path d="M0.0 272.0 C9.0 274.3 36.0 281.3 54.0 286.0 C72.0 290.7 86.3 295.0 108.0 300.0 C129.7 305.0 158.0 312.3 184.0 316.0 C210.0 319.7 237.7 322.2 264.0 322.0 C290.3 321.8 326.0 316.8 342.0 315.0 C358.0 313.2 340.3 313.3 360.0 311.0 C379.7 308.7 436.7 305.5 460.0 301.0 C483.3 296.5 486.0 288.2 500.0 284.0 C514.0 279.8 525.3 278.0 544.0 276.0 C562.7 274.0 600.7 272.7 612.0 272.0 L612 344 L0 344Z" fill="#5a7e64"/>
<path d="M77.0 344.0 L76.0 288.0 L78.0 248.0 L86.0 178.0 L87.0 140.0 L93.0 140.0 L92.0 178.0 L88.0 248.0 L94.0 288.0 L96.0 344.0Z" fill="#836c64"/>
<path d="M42.0 143.0 C44.0 143.8 50.3 145.7 54.0 148.0 C57.7 150.3 62.0 152.7 64.0 157.0 C66.0 161.3 64.0 168.0 66.0 174.0 C68.0 180.0 74.3 189.8 76.0 193.0" fill="none" stroke="#836c64" stroke-width="3.2" stroke-linecap="round"/>
<path d="M126.0 114.0 C124.5 116.8 119.5 125.5 117.0 131.0 C114.5 136.5 113.2 139.2 111.0 147.0 C108.8 154.8 106.3 167.8 104.0 178.0 C101.7 188.2 98.2 203.0 97.0 208.0" fill="none" stroke="#836c64" stroke-width="3.4" stroke-linecap="round"/>
<path d="M25.0 208.0 C27.8 209.7 36.7 215.3 42.0 218.0 C47.3 220.7 50.8 220.3 57.0 224.0 C63.2 227.7 75.3 237.3 79.0 240.0" fill="none" stroke="#836c64" stroke-width="3.2" stroke-linecap="round"/>
<path d="M146.0 200.0 C143.2 202.2 135.0 208.8 129.0 213.0 C123.0 217.2 116.7 220.0 110.0 225.0 C103.3 230.0 92.5 240.0 89.0 243.0" fill="none" stroke="#836c64" stroke-width="3.2" stroke-linecap="round"/>
<path d="M53.0 265.0 C54.2 266.8 57.2 271.8 60.0 276.0 C62.8 280.2 68.3 287.7 70.0 290.0" fill="none" stroke="#836c64" stroke-width="3.5" stroke-linecap="round"/>
<path d="M114.0 263.0 C112.3 263.5 107.3 264.3 104.0 266.0 C100.7 267.7 95.7 271.8 94.0 273.0" fill="none" stroke="#836c64" stroke-width="3.2" stroke-linecap="round"/>
<path d="M522.0 344.0 L518.0 288.0 L521.0 248.0 L523.0 178.0 L523.0 142.0 L530.0 142.0 L530.0 178.0 L530.0 248.0 L534.0 288.0 L541.0 344.0Z" fill="#836c64"/>
<path d="M488.0 117.0 C489.3 119.7 493.2 127.2 496.0 133.0 C498.8 138.8 502.7 144.5 505.0 152.0 C507.3 159.5 507.2 167.8 510.0 178.0 C512.8 188.2 520.0 207.2 522.0 213.0" fill="none" stroke="#836c64" stroke-width="3.2" stroke-linecap="round"/>
<path d="M575.0 144.0 C573.2 145.3 567.7 149.5 564.0 152.0 C560.3 154.5 556.7 154.7 553.0 159.0 C549.3 163.3 545.8 169.8 542.0 178.0 C538.2 186.2 532.0 203.0 530.0 208.0" fill="none" stroke="#836c64" stroke-width="3.2" stroke-linecap="round"/>
<path d="M472.0 202.0 C474.8 204.3 483.7 212.0 489.0 216.0 C494.3 220.0 498.5 222.0 504.0 226.0 C509.5 230.0 519.0 237.7 522.0 240.0" fill="none" stroke="#836c64" stroke-width="3.2" stroke-linecap="round"/>
<path d="M594.0 215.0 C591.5 215.8 584.3 218.2 579.0 220.0 C573.7 221.8 569.5 222.2 562.0 226.0 C554.5 229.8 538.7 240.2 534.0 243.0" fill="none" stroke="#836c64" stroke-width="3.2" stroke-linecap="round"/>
<path d="M540.0 303.0 C542.0 300.5 548.2 293.3 552.0 288.0 C555.8 282.7 561.2 273.8 563.0 271.0" fill="none" stroke="#836c64" stroke-width="3.5" stroke-linecap="round"/>
<path d="M504.0 268.0 C505.7 268.5 511.0 269.8 514.0 271.0 C517.0 272.2 520.7 274.3 522.0 275.0" fill="none" stroke="#836c64" stroke-width="3.2" stroke-linecap="round"/>
<path d="M11.0 130.8 C11.3 128.1 13.7 122.5 16.0 120.8 C18.3 119.1 23.3 122.3 25.0 120.8 C26.7 119.3 24.2 116.1 26.0 111.8 C27.8 107.5 32.7 97.8 36.0 94.8 C39.3 91.8 41.3 93.6 46.0 93.8 C50.7 94.0 58.3 96.8 64.0 95.8 C69.7 94.8 75.0 90.0 80.0 87.8 C85.0 85.6 90.5 82.8 94.0 82.8 C97.5 82.8 96.8 86.6 101.0 87.8 C105.2 89.0 113.5 88.1 119.0 89.8 C124.5 91.5 129.5 94.8 134.0 97.8 C138.5 100.8 145.2 105.1 146.0 107.8 C146.8 110.5 141.8 112.6 139.0 113.8 C136.2 115.0 131.5 113.0 129.0 114.8 C126.5 116.6 126.5 122.5 124.0 124.8 C121.5 127.1 117.0 129.1 114.0 128.8 C111.0 128.5 107.2 121.8 106.0 122.8 C104.8 123.8 108.7 131.6 107.0 134.8 C105.3 138.0 99.3 140.0 96.0 141.8 C92.7 143.6 90.7 144.0 87.0 145.8 C83.3 147.6 77.8 152.1 74.0 152.8 C70.2 153.5 67.3 151.1 64.0 149.8 C60.7 148.5 58.2 145.3 54.0 144.8 C49.8 144.3 43.2 147.6 39.0 146.8 C34.8 146.0 31.5 142.1 29.0 139.8 C26.5 137.5 26.5 133.3 24.0 132.8 C21.5 132.3 16.2 137.1 14.0 136.8 C11.8 136.5 10.7 133.5 11.0 130.8Z" fill="#a9c264"/>
<path d="M11.0 129.0 C11.3 126.3 13.7 120.7 16.0 119.0 C18.3 117.3 23.3 120.5 25.0 119.0 C26.7 117.5 24.2 114.3 26.0 110.0 C27.8 105.7 32.7 96.0 36.0 93.0 C39.3 90.0 41.3 91.8 46.0 92.0 C50.7 92.2 58.3 95.0 64.0 94.0 C69.7 93.0 75.0 88.2 80.0 86.0 C85.0 83.8 90.5 81.0 94.0 81.0 C97.5 81.0 96.8 84.8 101.0 86.0 C105.2 87.2 113.5 86.3 119.0 88.0 C124.5 89.7 129.5 93.0 134.0 96.0 C138.5 99.0 145.2 103.3 146.0 106.0 C146.8 108.7 141.8 110.8 139.0 112.0 C136.2 113.2 131.5 111.2 129.0 113.0 C126.5 114.8 126.5 120.7 124.0 123.0 C121.5 125.3 117.0 127.3 114.0 127.0 C111.0 126.7 107.2 120.0 106.0 121.0 C104.8 122.0 108.7 129.8 107.0 133.0 C105.3 136.2 99.3 138.2 96.0 140.0 C92.7 141.8 90.7 142.2 87.0 144.0 C83.3 145.8 77.8 150.3 74.0 151.0 C70.2 151.7 67.3 149.3 64.0 148.0 C60.7 146.7 58.2 143.5 54.0 143.0 C49.8 142.5 43.2 145.8 39.0 145.0 C34.8 144.2 31.5 140.3 29.0 138.0 C26.5 135.7 26.5 131.5 24.0 131.0 C21.5 130.5 16.2 135.3 14.0 135.0 C11.8 134.7 10.7 131.7 11.0 129.0Z" fill="#b8cd78"/>
<path d="M29.9 123.9 C30.1 122.0 31.8 117.9 33.5 116.7 C35.2 115.5 38.8 117.8 40.0 116.7 C41.2 115.6 39.4 113.4 40.7 110.2 C42.0 107.1 45.5 100.2 47.9 98.0 C50.3 95.8 51.7 97.2 55.1 97.3 C58.5 97.4 64.0 99.4 68.1 98.7 C72.1 98.0 76.0 94.5 79.6 92.9 C83.2 91.4 87.1 89.3 89.7 89.3 C92.2 89.3 91.7 92.1 94.7 92.9 C97.7 93.8 103.7 93.2 107.7 94.4 C111.6 95.6 115.2 98.0 118.5 100.2 C121.7 102.3 126.5 105.4 127.1 107.4 C127.7 109.3 124.1 110.8 122.1 111.7 C120.0 112.5 116.7 111.1 114.9 112.4 C113.1 113.7 113.1 117.9 111.3 119.6 C109.5 121.3 106.2 122.7 104.1 122.5 C101.9 122.2 99.1 117.4 98.3 118.1 C97.5 118.9 100.2 124.5 99.0 126.8 C97.8 129.1 93.5 130.5 91.1 131.8 C88.7 133.1 87.3 133.4 84.6 134.7 C82.0 136.0 78.0 139.3 75.3 139.8 C72.5 140.2 70.5 138.5 68.1 137.6 C65.7 136.6 63.9 134.3 60.9 134.0 C57.9 133.6 53.1 136.0 50.1 135.4 C47.1 134.8 44.7 132.1 42.9 130.4 C41.1 128.7 41.1 125.7 39.3 125.4 C37.5 125.0 33.6 128.5 32.1 128.2 C30.5 128.0 29.7 125.8 29.9 123.9Z" fill="#c2d588" opacity=".8"/>
<path d="M92.0 161.8 C94.7 159.3 100.0 155.3 104.0 154.8 C108.0 154.3 111.7 159.3 116.0 158.8 C120.3 158.3 125.3 154.3 130.0 151.8 C134.7 149.3 139.0 144.6 144.0 143.8 C149.0 143.0 155.3 145.1 160.0 146.8 C164.7 148.5 169.7 150.8 172.0 153.8 C174.3 156.8 174.3 161.8 174.0 164.8 C173.7 167.8 169.2 170.1 170.0 171.8 C170.8 173.5 176.8 173.3 179.0 174.8 C181.2 176.3 183.3 178.8 183.0 180.8 C182.7 182.8 180.2 185.6 177.0 186.8 C173.8 188.0 166.5 185.3 164.0 187.8 C161.5 190.3 163.7 199.0 162.0 201.8 C160.3 204.6 156.7 205.6 154.0 204.8 C151.3 204.0 149.3 198.8 146.0 196.8 C142.7 194.8 137.7 194.0 134.0 192.8 C130.3 191.6 127.3 191.5 124.0 189.8 C120.7 188.1 117.3 182.8 114.0 182.8 C110.7 182.8 107.3 188.6 104.0 189.8 C100.7 191.0 96.8 191.5 94.0 189.8 C91.2 188.1 88.0 183.1 87.0 179.8 C86.0 176.5 87.2 172.8 88.0 169.8 C88.8 166.8 89.3 164.3 92.0 161.8Z" fill="#a9c264"/>
<path d="M92.0 160.0 C94.7 157.5 100.0 153.5 104.0 153.0 C108.0 152.5 111.7 157.5 116.0 157.0 C120.3 156.5 125.3 152.5 130.0 150.0 C134.7 147.5 139.0 142.8 144.0 142.0 C149.0 141.2 155.3 143.3 160.0 145.0 C164.7 146.7 169.7 149.0 172.0 152.0 C174.3 155.0 174.3 160.0 174.0 163.0 C173.7 166.0 169.2 168.3 170.0 170.0 C170.8 171.7 176.8 171.5 179.0 173.0 C181.2 174.5 183.3 177.0 183.0 179.0 C182.7 181.0 180.2 183.8 177.0 185.0 C173.8 186.2 166.5 183.5 164.0 186.0 C161.5 188.5 163.7 197.2 162.0 200.0 C160.3 202.8 156.7 203.8 154.0 203.0 C151.3 202.2 149.3 197.0 146.0 195.0 C142.7 193.0 137.7 192.2 134.0 191.0 C130.3 189.8 127.3 189.7 124.0 188.0 C120.7 186.3 117.3 181.0 114.0 181.0 C110.7 181.0 107.3 186.8 104.0 188.0 C100.7 189.2 96.8 189.7 94.0 188.0 C91.2 186.3 88.0 181.3 87.0 178.0 C86.0 174.7 87.2 171.0 88.0 168.0 C88.8 165.0 89.3 162.5 92.0 160.0Z" fill="#b8cd78"/>
<path d="M105.9 161.8 C107.8 160.0 111.6 157.2 114.5 156.8 C117.4 156.4 120.0 160.0 123.1 159.7 C126.3 159.3 129.9 156.4 133.2 154.6 C136.6 152.8 139.7 149.5 143.3 148.9 C146.9 148.3 151.5 149.8 154.8 151.0 C158.2 152.2 161.8 153.9 163.5 156.1 C165.1 158.2 165.1 161.8 164.9 164.0 C164.7 166.2 161.4 167.8 162.0 169.0 C162.6 170.2 166.9 170.1 168.5 171.2 C170.1 172.3 171.6 174.1 171.4 175.5 C171.1 177.0 169.3 179.0 167.1 179.8 C164.8 180.7 159.5 178.8 157.7 180.6 C155.9 182.4 157.5 188.6 156.3 190.6 C155.1 192.7 152.4 193.4 150.5 192.8 C148.6 192.2 147.1 188.5 144.7 187.0 C142.3 185.6 138.7 185.0 136.1 184.2 C133.5 183.3 131.3 183.2 128.9 182.0 C126.5 180.8 124.1 177.0 121.7 177.0 C119.3 177.0 116.9 181.2 114.5 182.0 C112.1 182.8 109.3 183.2 107.3 182.0 C105.3 180.8 103.0 177.2 102.3 174.8 C101.5 172.4 102.4 169.8 103.0 167.6 C103.6 165.4 103.9 163.6 105.9 161.8Z" fill="#c2d588" opacity=".8"/>
<path d="M1.0 177.8 C2.8 174.0 5.2 172.8 9.0 171.8 C12.8 170.8 20.2 173.0 24.0 171.8 C27.8 170.6 28.0 166.1 32.0 164.8 C36.0 163.5 43.3 162.6 48.0 163.8 C52.7 165.0 56.5 171.1 60.0 171.8 C63.5 172.5 66.3 169.3 69.0 167.8 C71.7 166.3 73.8 162.0 76.0 162.8 C78.2 163.6 80.5 169.1 82.0 172.8 C83.5 176.5 83.3 180.0 85.0 184.8 C86.7 189.6 88.8 199.6 92.0 201.8 C95.2 204.0 99.5 198.1 104.0 197.8 C108.5 197.5 114.5 198.1 119.0 199.8 C123.5 201.5 128.5 204.8 131.0 207.8 C133.5 210.8 135.2 215.3 134.0 217.8 C132.8 220.3 127.0 220.8 124.0 222.8 C121.0 224.8 119.3 227.3 116.0 229.8 C112.7 232.3 108.5 236.5 104.0 237.8 C99.5 239.1 94.0 239.5 89.0 237.8 C84.0 236.1 79.0 230.5 74.0 227.8 C69.0 225.1 64.0 223.1 59.0 221.8 C54.0 220.5 49.0 220.6 44.0 219.8 C39.0 219.0 34.0 217.6 29.0 216.8 C24.0 216.0 18.2 216.3 14.0 214.8 C9.8 213.3 6.7 211.1 4.0 207.8 C1.3 204.5 -1.5 199.8 -2.0 194.8 C-2.5 189.8 -0.8 181.6 1.0 177.8Z" fill="#a9c264"/>
<path d="M1.0 176.0 C2.8 172.2 5.2 171.0 9.0 170.0 C12.8 169.0 20.2 171.2 24.0 170.0 C27.8 168.8 28.0 164.3 32.0 163.0 C36.0 161.7 43.3 160.8 48.0 162.0 C52.7 163.2 56.5 169.3 60.0 170.0 C63.5 170.7 66.3 167.5 69.0 166.0 C71.7 164.5 73.8 160.2 76.0 161.0 C78.2 161.8 80.5 167.3 82.0 171.0 C83.5 174.7 83.3 178.2 85.0 183.0 C86.7 187.8 88.8 197.8 92.0 200.0 C95.2 202.2 99.5 196.3 104.0 196.0 C108.5 195.7 114.5 196.3 119.0 198.0 C123.5 199.7 128.5 203.0 131.0 206.0 C133.5 209.0 135.2 213.5 134.0 216.0 C132.8 218.5 127.0 219.0 124.0 221.0 C121.0 223.0 119.3 225.5 116.0 228.0 C112.7 230.5 108.5 234.7 104.0 236.0 C99.5 237.3 94.0 237.7 89.0 236.0 C84.0 234.3 79.0 228.7 74.0 226.0 C69.0 223.3 64.0 221.3 59.0 220.0 C54.0 218.7 49.0 218.8 44.0 218.0 C39.0 217.2 34.0 215.8 29.0 215.0 C24.0 214.2 18.2 214.5 14.0 213.0 C9.8 211.5 6.7 209.3 4.0 206.0 C1.3 202.7 -1.5 198.0 -2.0 193.0 C-2.5 188.0 -0.8 179.8 1.0 176.0Z" fill="#b8cd78"/>
<path d="M20.3 179.9 C21.6 177.1 23.3 176.3 26.0 175.5 C28.8 174.8 34.1 176.4 36.8 175.5 C39.6 174.7 39.7 171.5 42.6 170.5 C45.5 169.5 50.7 168.9 54.1 169.8 C57.5 170.6 60.2 175.1 62.7 175.5 C65.3 176.0 67.3 173.7 69.2 172.7 C71.1 171.6 72.7 168.5 74.3 169.1 C75.8 169.7 77.5 173.6 78.6 176.3 C79.7 178.9 79.5 181.4 80.7 184.9 C81.9 188.4 83.5 195.6 85.8 197.1 C88.1 198.7 91.2 194.5 94.4 194.3 C97.7 194.0 102.0 194.5 105.2 195.7 C108.5 196.9 112.1 199.3 113.9 201.5 C115.7 203.6 116.9 206.9 116.0 208.7 C115.2 210.5 111.0 210.8 108.8 212.3 C106.7 213.7 105.5 215.5 103.1 217.3 C100.7 219.1 97.7 222.1 94.4 223.1 C91.2 224.0 87.2 224.3 83.6 223.1 C80.0 221.9 76.4 217.8 72.8 215.9 C69.2 213.9 65.6 212.5 62.0 211.5 C58.4 210.6 54.8 210.7 51.2 210.1 C47.6 209.5 44.0 208.5 40.4 207.9 C36.8 207.3 32.6 207.6 29.6 206.5 C26.6 205.4 24.3 203.9 22.4 201.5 C20.5 199.1 18.5 195.7 18.1 192.1 C17.7 188.5 18.9 182.6 20.3 179.9Z" fill="#c2d588" opacity=".8"/>
<path d="M32.0 247.8 C33.0 246.3 34.0 245.6 36.0 244.8 C38.0 244.0 41.3 242.5 44.0 242.8 C46.7 243.1 50.3 245.0 52.0 246.8 C53.7 248.6 52.0 252.6 54.0 253.8 C56.0 255.0 60.2 254.5 64.0 253.8 C67.8 253.1 73.2 250.5 77.0 249.8 C80.8 249.1 83.8 249.0 87.0 249.8 C90.2 250.6 94.2 251.5 96.0 254.8 C97.8 258.1 98.7 266.5 98.0 269.8 C97.3 273.1 94.7 273.1 92.0 274.8 C89.3 276.5 85.8 279.0 82.0 279.8 C78.2 280.6 72.3 281.1 69.0 279.8 C65.7 278.5 64.8 273.8 62.0 271.8 C59.2 269.8 55.8 268.8 52.0 267.8 C48.2 266.8 42.5 267.1 39.0 265.8 C35.5 264.5 32.5 261.8 31.0 259.8 C29.5 257.8 29.8 255.8 30.0 253.8 C30.2 251.8 31.0 249.3 32.0 247.8Z" fill="#a9c264"/>
<path d="M32.0 246.0 C33.0 244.5 34.0 243.8 36.0 243.0 C38.0 242.2 41.3 240.7 44.0 241.0 C46.7 241.3 50.3 243.2 52.0 245.0 C53.7 246.8 52.0 250.8 54.0 252.0 C56.0 253.2 60.2 252.7 64.0 252.0 C67.8 251.3 73.2 248.7 77.0 248.0 C80.8 247.3 83.8 247.2 87.0 248.0 C90.2 248.8 94.2 249.7 96.0 253.0 C97.8 256.3 98.7 264.7 98.0 268.0 C97.3 271.3 94.7 271.3 92.0 273.0 C89.3 274.7 85.8 277.2 82.0 278.0 C78.2 278.8 72.3 279.3 69.0 278.0 C65.7 276.7 64.8 272.0 62.0 270.0 C59.2 268.0 55.8 267.0 52.0 266.0 C48.2 265.0 42.5 265.3 39.0 264.0 C35.5 262.7 32.5 260.0 31.0 258.0 C29.5 256.0 29.8 254.0 30.0 252.0 C30.2 250.0 31.0 247.5 32.0 246.0Z" fill="#b8cd78"/>
<path d="M41.1 247.2 C41.8 246.1 42.5 245.7 44.0 245.1 C45.4 244.5 47.8 243.4 49.7 243.6 C51.7 243.9 54.3 245.2 55.5 246.5 C56.7 247.8 55.5 250.7 56.9 251.5 C58.4 252.4 61.4 252.0 64.1 251.5 C66.9 251.1 70.7 249.1 73.5 248.7 C76.3 248.2 78.4 248.1 80.7 248.7 C83.0 249.3 85.9 249.9 87.2 252.3 C88.5 254.7 89.1 260.7 88.6 263.1 C88.1 265.5 86.2 265.5 84.3 266.7 C82.4 267.9 79.9 269.7 77.1 270.3 C74.3 270.9 70.1 271.2 67.7 270.3 C65.3 269.3 64.7 265.9 62.7 264.5 C60.7 263.1 58.3 262.3 55.5 261.6 C52.7 260.9 48.7 261.1 46.1 260.2 C43.6 259.2 41.5 257.3 40.4 255.9 C39.3 254.4 39.5 253.0 39.7 251.5 C39.8 250.1 40.4 248.3 41.1 247.2Z" fill="#c2d588" opacity=".8"/>
<path d="M89.0 241.8 C90.5 239.6 94.8 236.0 99.0 234.8 C103.2 233.6 108.2 234.6 114.0 234.8 C119.8 235.0 128.7 235.1 134.0 235.8 C139.3 236.5 143.7 237.5 146.0 238.8 C148.3 240.1 148.7 242.5 148.0 243.8 C147.3 245.1 144.7 246.3 142.0 246.8 C139.3 247.3 133.0 245.6 132.0 246.8 C131.0 248.0 135.5 251.6 136.0 253.8 C136.5 256.0 137.3 258.1 135.0 259.8 C132.7 261.5 125.8 263.1 122.0 263.8 C118.2 264.5 115.0 265.1 112.0 263.8 C109.0 262.5 106.7 257.5 104.0 255.8 C101.3 254.1 98.3 255.1 96.0 253.8 C93.7 252.5 91.2 249.8 90.0 247.8 C88.8 245.8 87.5 244.0 89.0 241.8Z" fill="#a9c264"/>
<path d="M89.0 240.0 C90.5 237.8 94.8 234.2 99.0 233.0 C103.2 231.8 108.2 232.8 114.0 233.0 C119.8 233.2 128.7 233.3 134.0 234.0 C139.3 234.7 143.7 235.7 146.0 237.0 C148.3 238.3 148.7 240.7 148.0 242.0 C147.3 243.3 144.7 244.5 142.0 245.0 C139.3 245.5 133.0 243.8 132.0 245.0 C131.0 246.2 135.5 249.8 136.0 252.0 C136.5 254.2 137.3 256.3 135.0 258.0 C132.7 259.7 125.8 261.3 122.0 262.0 C118.2 262.7 115.0 263.3 112.0 262.0 C109.0 260.7 106.7 255.7 104.0 254.0 C101.3 252.3 98.3 253.3 96.0 252.0 C93.7 250.7 91.2 248.0 90.0 246.0 C88.8 244.0 87.5 242.2 89.0 240.0Z" fill="#b8cd78"/>
<path d="M98.7 239.8 C99.7 238.2 102.9 235.6 105.9 234.7 C108.9 233.9 112.5 234.6 116.7 234.7 C120.9 234.9 127.2 235.0 131.1 235.5 C134.9 235.9 138.0 236.7 139.7 237.6 C141.4 238.6 141.6 240.3 141.1 241.2 C140.7 242.2 138.7 243.0 136.8 243.4 C134.9 243.7 130.3 242.5 129.6 243.4 C128.9 244.2 132.1 246.9 132.5 248.4 C132.9 250.0 133.5 251.5 131.8 252.7 C130.1 253.9 125.2 255.1 122.4 255.6 C119.7 256.1 117.4 256.6 115.2 255.6 C113.1 254.7 111.4 251.1 109.5 249.9 C107.5 248.7 105.4 249.4 103.7 248.4 C102.0 247.5 100.2 245.5 99.4 244.1 C98.5 242.7 97.6 241.3 98.7 239.8Z" fill="#c2d588" opacity=".8"/>
<path d="M471.0 113.8 C470.7 111.1 471.5 104.8 474.0 101.8 C476.5 98.8 481.0 97.1 486.0 95.8 C491.0 94.5 499.3 93.8 504.0 93.8 C508.7 93.8 511.7 96.8 514.0 95.8 C516.3 94.8 515.5 89.5 518.0 87.8 C520.5 86.1 525.8 85.0 529.0 85.8 C532.2 86.6 533.7 90.6 537.0 92.8 C540.3 95.0 544.5 98.0 549.0 98.8 C553.5 99.6 559.5 97.6 564.0 97.8 C568.5 98.0 572.7 97.5 576.0 99.8 C579.3 102.1 581.7 108.5 584.0 111.8 C586.3 115.1 589.3 117.6 590.0 119.8 C590.7 122.0 586.5 124.3 588.0 124.8 C589.5 125.3 596.0 121.6 599.0 122.8 C602.0 124.0 605.2 128.6 606.0 131.8 C606.8 135.0 606.3 139.5 604.0 141.8 C601.7 144.1 595.0 144.0 592.0 145.8 C589.0 147.6 588.7 151.5 586.0 152.8 C583.3 154.1 579.7 154.3 576.0 153.8 C572.3 153.3 567.7 149.8 564.0 149.8 C560.3 149.8 557.3 152.8 554.0 153.8 C550.7 154.8 548.2 155.8 544.0 155.8 C539.8 155.8 533.7 154.8 529.0 153.8 C524.3 152.8 519.3 152.1 516.0 149.8 C512.7 147.5 509.8 143.1 509.0 139.8 C508.2 136.5 511.8 132.1 511.0 129.8 C510.2 127.5 506.5 125.8 504.0 125.8 C501.5 125.8 498.5 129.8 496.0 129.8 C493.5 129.8 491.0 127.8 489.0 125.8 C487.0 123.8 486.2 119.1 484.0 117.8 C481.8 116.5 478.2 118.5 476.0 117.8 C473.8 117.1 471.3 116.5 471.0 113.8Z" fill="#a9c264"/>
<path d="M471.0 112.0 C470.7 109.3 471.5 103.0 474.0 100.0 C476.5 97.0 481.0 95.3 486.0 94.0 C491.0 92.7 499.3 92.0 504.0 92.0 C508.7 92.0 511.7 95.0 514.0 94.0 C516.3 93.0 515.5 87.7 518.0 86.0 C520.5 84.3 525.8 83.2 529.0 84.0 C532.2 84.8 533.7 88.8 537.0 91.0 C540.3 93.2 544.5 96.2 549.0 97.0 C553.5 97.8 559.5 95.8 564.0 96.0 C568.5 96.2 572.7 95.7 576.0 98.0 C579.3 100.3 581.7 106.7 584.0 110.0 C586.3 113.3 589.3 115.8 590.0 118.0 C590.7 120.2 586.5 122.5 588.0 123.0 C589.5 123.5 596.0 119.8 599.0 121.0 C602.0 122.2 605.2 126.8 606.0 130.0 C606.8 133.2 606.3 137.7 604.0 140.0 C601.7 142.3 595.0 142.2 592.0 144.0 C589.0 145.8 588.7 149.7 586.0 151.0 C583.3 152.3 579.7 152.5 576.0 152.0 C572.3 151.5 567.7 148.0 564.0 148.0 C560.3 148.0 557.3 151.0 554.0 152.0 C550.7 153.0 548.2 154.0 544.0 154.0 C539.8 154.0 533.7 153.0 529.0 152.0 C524.3 151.0 519.3 150.3 516.0 148.0 C512.7 145.7 509.8 141.3 509.0 138.0 C508.2 134.7 511.8 130.3 511.0 128.0 C510.2 125.7 506.5 124.0 504.0 124.0 C501.5 124.0 498.5 128.0 496.0 128.0 C493.5 128.0 491.0 126.0 489.0 124.0 C487.0 122.0 486.2 117.3 484.0 116.0 C481.8 114.7 478.2 116.7 476.0 116.0 C473.8 115.3 471.3 114.7 471.0 112.0Z" fill="#b8cd78"/>
<path d="M490.8 112.4 C490.6 110.5 491.2 105.9 493.0 103.8 C494.8 101.6 498.0 100.4 501.6 99.5 C505.2 98.5 511.2 98.0 514.6 98.0 C517.9 98.0 520.1 100.2 521.8 99.5 C523.5 98.7 522.9 94.9 524.7 93.7 C526.5 92.5 530.3 91.7 532.6 92.3 C534.9 92.9 535.9 95.7 538.3 97.3 C540.7 98.9 543.7 101.0 547.0 101.6 C550.2 102.2 554.5 100.8 557.8 100.9 C561.0 101.0 564.0 100.7 566.4 102.3 C568.8 104.0 570.5 108.6 572.2 111.0 C573.9 113.4 576.0 115.2 576.5 116.7 C577.0 118.3 574.0 120.0 575.1 120.3 C576.1 120.7 580.8 118.1 583.0 118.9 C585.1 119.7 587.4 123.1 588.0 125.4 C588.6 127.7 588.3 130.9 586.6 132.6 C584.9 134.3 580.1 134.1 577.9 135.5 C575.8 136.8 575.5 139.5 573.6 140.5 C571.7 141.5 569.1 141.6 566.4 141.2 C563.8 140.9 560.4 138.3 557.8 138.3 C555.1 138.3 553.0 140.5 550.6 141.2 C548.2 141.9 546.4 142.7 543.4 142.7 C540.4 142.7 535.9 141.9 532.6 141.2 C529.2 140.5 525.6 140.0 523.2 138.3 C520.8 136.7 518.8 133.5 518.2 131.1 C517.6 128.7 520.2 125.6 519.6 123.9 C519.0 122.3 516.4 121.1 514.6 121.1 C512.8 121.1 510.6 123.9 508.8 123.9 C507.0 123.9 505.2 122.5 503.8 121.1 C502.3 119.6 501.7 116.3 500.2 115.3 C498.6 114.3 496.0 115.8 494.4 115.3 C492.9 114.8 491.1 114.3 490.8 112.4Z" fill="#c2d588" opacity=".8"/>
<path d="M434.0 179.8 C435.8 177.5 442.0 175.1 444.0 171.8 C446.0 168.5 443.5 163.5 446.0 159.8 C448.5 156.1 454.3 152.1 459.0 149.8 C463.7 147.5 469.8 145.5 474.0 145.8 C478.2 146.1 480.3 149.1 484.0 151.8 C487.7 154.5 491.8 160.8 496.0 161.8 C500.2 162.8 504.7 157.6 509.0 157.8 C513.3 158.0 518.8 160.0 522.0 162.8 C525.2 165.6 526.7 170.6 528.0 174.8 C529.3 179.0 531.0 185.0 530.0 187.8 C529.0 190.6 526.3 191.8 522.0 191.8 C517.7 191.8 507.3 186.8 504.0 187.8 C500.7 188.8 504.0 196.5 502.0 197.8 C500.0 199.1 496.7 196.1 492.0 195.8 C487.3 195.5 477.3 194.3 474.0 195.8 C470.7 197.3 474.5 202.6 472.0 204.8 C469.5 207.0 462.3 209.3 459.0 208.8 C455.7 208.3 453.3 205.0 452.0 201.8 C450.7 198.6 453.2 191.8 451.0 189.8 C448.8 187.8 442.0 190.5 439.0 189.8 C436.0 189.1 433.8 187.5 433.0 185.8 C432.2 184.1 432.2 182.1 434.0 179.8Z" fill="#a9c264"/>
<path d="M434.0 178.0 C435.8 175.7 442.0 173.3 444.0 170.0 C446.0 166.7 443.5 161.7 446.0 158.0 C448.5 154.3 454.3 150.3 459.0 148.0 C463.7 145.7 469.8 143.7 474.0 144.0 C478.2 144.3 480.3 147.3 484.0 150.0 C487.7 152.7 491.8 159.0 496.0 160.0 C500.2 161.0 504.7 155.8 509.0 156.0 C513.3 156.2 518.8 158.2 522.0 161.0 C525.2 163.8 526.7 168.8 528.0 173.0 C529.3 177.2 531.0 183.2 530.0 186.0 C529.0 188.8 526.3 190.0 522.0 190.0 C517.7 190.0 507.3 185.0 504.0 186.0 C500.7 187.0 504.0 194.7 502.0 196.0 C500.0 197.3 496.7 194.3 492.0 194.0 C487.3 193.7 477.3 192.5 474.0 194.0 C470.7 195.5 474.5 200.8 472.0 203.0 C469.5 205.2 462.3 207.5 459.0 207.0 C455.7 206.5 453.3 203.2 452.0 200.0 C450.7 196.8 453.2 190.0 451.0 188.0 C448.8 186.0 442.0 188.7 439.0 188.0 C436.0 187.3 433.8 185.7 433.0 184.0 C432.2 182.3 432.2 180.3 434.0 178.0Z" fill="#b8cd78"/>
<path d="M447.4 176.0 C448.8 174.3 453.2 172.6 454.6 170.2 C456.1 167.8 454.3 164.2 456.1 161.6 C457.9 158.9 462.1 156.1 465.4 154.4 C468.8 152.7 473.2 151.3 476.2 151.5 C479.2 151.7 480.8 153.9 483.4 155.8 C486.1 157.7 489.1 162.3 492.1 163.0 C495.1 163.7 498.3 160.0 501.4 160.1 C504.6 160.3 508.5 161.7 510.8 163.7 C513.1 165.8 514.2 169.4 515.1 172.4 C516.1 175.4 517.3 179.7 516.6 181.7 C515.8 183.8 513.9 184.6 510.8 184.6 C507.7 184.6 500.2 181.0 497.8 181.7 C495.4 182.5 497.8 188.0 496.4 188.9 C495.0 189.9 492.6 187.7 489.2 187.5 C485.8 187.3 478.6 186.4 476.2 187.5 C473.8 188.6 476.6 192.4 474.8 194.0 C473.0 195.5 467.8 197.2 465.4 196.9 C463.0 196.5 461.4 194.1 460.4 191.8 C459.4 189.5 461.2 184.6 459.7 183.2 C458.1 181.7 453.2 183.7 451.0 183.2 C448.9 182.7 447.3 181.5 446.7 180.3 C446.1 179.1 446.1 177.7 447.4 176.0Z" fill="#c2d588" opacity=".8"/>
<path d="M532.0 171.8 C532.3 168.6 534.5 167.0 536.0 165.8 C537.5 164.6 539.3 163.3 541.0 164.8 C542.7 166.3 543.5 173.5 546.0 174.8 C548.5 176.1 552.2 174.1 556.0 172.8 C559.8 171.5 564.3 168.0 569.0 166.8 C573.7 165.6 579.0 165.0 584.0 165.8 C589.0 166.6 594.7 169.5 599.0 171.8 C603.3 174.1 607.2 176.0 610.0 179.8 C612.8 183.6 615.3 189.0 616.0 194.8 C616.7 200.6 616.8 210.6 614.0 214.8 C611.2 219.0 604.0 218.0 599.0 219.8 C594.0 221.6 589.8 225.1 584.0 225.8 C578.2 226.5 569.0 223.1 564.0 223.8 C559.0 224.5 558.2 226.8 554.0 229.8 C549.8 232.8 544.0 239.8 539.0 241.8 C534.0 243.8 527.7 243.0 524.0 241.8 C520.3 240.6 518.7 237.6 517.0 234.8 C515.3 232.0 516.2 227.0 514.0 224.8 C511.8 222.6 508.2 222.3 504.0 221.8 C499.8 221.3 492.3 223.5 489.0 221.8 C485.7 220.1 484.0 215.1 484.0 211.8 C484.0 208.5 485.7 204.1 489.0 201.8 C492.3 199.5 499.5 198.1 504.0 197.8 C508.5 197.5 511.7 200.3 516.0 199.8 C520.3 199.3 527.0 197.3 530.0 194.8 C533.0 192.3 533.7 188.6 534.0 184.8 C534.3 181.0 531.7 175.0 532.0 171.8Z" fill="#a9c264"/>
<path d="M532.0 170.0 C532.3 166.8 534.5 165.2 536.0 164.0 C537.5 162.8 539.3 161.5 541.0 163.0 C542.7 164.5 543.5 171.7 546.0 173.0 C548.5 174.3 552.2 172.3 556.0 171.0 C559.8 169.7 564.3 166.2 569.0 165.0 C573.7 163.8 579.0 163.2 584.0 164.0 C589.0 164.8 594.7 167.7 599.0 170.0 C603.3 172.3 607.2 174.2 610.0 178.0 C612.8 181.8 615.3 187.2 616.0 193.0 C616.7 198.8 616.8 208.8 614.0 213.0 C611.2 217.2 604.0 216.2 599.0 218.0 C594.0 219.8 589.8 223.3 584.0 224.0 C578.2 224.7 569.0 221.3 564.0 222.0 C559.0 222.7 558.2 225.0 554.0 228.0 C549.8 231.0 544.0 238.0 539.0 240.0 C534.0 242.0 527.7 241.2 524.0 240.0 C520.3 238.8 518.7 235.8 517.0 233.0 C515.3 230.2 516.2 225.2 514.0 223.0 C511.8 220.8 508.2 220.5 504.0 220.0 C499.8 219.5 492.3 221.7 489.0 220.0 C485.7 218.3 484.0 213.3 484.0 210.0 C484.0 206.7 485.7 202.3 489.0 200.0 C492.3 197.7 499.5 196.3 504.0 196.0 C508.5 195.7 511.7 198.5 516.0 198.0 C520.3 197.5 527.0 195.5 530.0 193.0 C533.0 190.5 533.7 186.8 534.0 183.0 C534.3 179.2 531.7 173.2 532.0 170.0Z" fill="#b8cd78"/>
<path d="M537.0 176.1 C537.2 173.8 538.8 172.6 539.9 171.8 C540.9 170.9 542.3 170.0 543.5 171.1 C544.7 172.1 545.3 177.3 547.1 178.3 C548.9 179.2 551.5 177.8 554.3 176.8 C557.0 175.9 560.3 173.3 563.6 172.5 C567.0 171.7 570.8 171.2 574.4 171.8 C578.0 172.4 582.1 174.4 585.2 176.1 C588.3 177.8 591.1 179.1 593.1 181.9 C595.2 184.6 597.0 188.5 597.5 192.7 C597.9 196.9 598.1 204.1 596.0 207.1 C594.0 210.1 588.8 209.3 585.2 210.7 C581.6 212.0 578.6 214.5 574.4 215.0 C570.2 215.5 563.6 213.1 560.0 213.5 C556.4 214.0 555.8 215.7 552.8 217.9 C549.8 220.0 545.6 225.1 542.0 226.5 C538.4 227.9 533.9 227.3 531.2 226.5 C528.6 225.7 527.4 223.5 526.2 221.5 C525.0 219.4 525.6 215.8 524.0 214.3 C522.5 212.7 519.8 212.5 516.8 212.1 C513.8 211.7 508.4 213.3 506.0 212.1 C503.6 210.9 502.4 207.3 502.4 204.9 C502.4 202.5 503.6 199.4 506.0 197.7 C508.4 196.0 513.6 195.1 516.8 194.8 C520.1 194.6 522.3 196.6 525.5 196.3 C528.6 195.9 533.4 194.5 535.5 192.7 C537.7 190.9 538.2 188.2 538.4 185.5 C538.7 182.7 536.7 178.4 537.0 176.1Z" fill="#c2d588" opacity=".8"/>
<path d="M469.0 244.8 C470.2 242.1 474.0 239.3 479.0 237.8 C484.0 236.3 492.3 235.5 499.0 235.8 C505.7 236.1 514.0 237.5 519.0 239.8 C524.0 242.1 527.7 246.1 529.0 249.8 C530.3 253.5 529.5 259.3 527.0 261.8 C524.5 264.3 517.0 263.5 514.0 264.8 C511.0 266.1 511.5 269.0 509.0 269.8 C506.5 270.6 502.3 271.1 499.0 269.8 C495.7 268.5 492.3 263.5 489.0 261.8 C485.7 260.1 481.8 261.1 479.0 259.8 C476.2 258.5 473.7 256.3 472.0 253.8 C470.3 251.3 467.8 247.5 469.0 244.8Z" fill="#a9c264"/>
<path d="M469.0 243.0 C470.2 240.3 474.0 237.5 479.0 236.0 C484.0 234.5 492.3 233.7 499.0 234.0 C505.7 234.3 514.0 235.7 519.0 238.0 C524.0 240.3 527.7 244.3 529.0 248.0 C530.3 251.7 529.5 257.5 527.0 260.0 C524.5 262.5 517.0 261.7 514.0 263.0 C511.0 264.3 511.5 267.2 509.0 268.0 C506.5 268.8 502.3 269.3 499.0 268.0 C495.7 266.7 492.3 261.7 489.0 260.0 C485.7 258.3 481.8 259.3 479.0 258.0 C476.2 256.7 473.7 254.5 472.0 252.0 C470.3 249.5 467.8 245.7 469.0 243.0Z" fill="#b8cd78"/>
<path d="M478.3 243.6 C479.1 241.7 481.9 239.7 485.5 238.6 C489.1 237.5 495.1 236.9 499.9 237.1 C504.7 237.4 510.7 238.3 514.3 240.0 C517.9 241.7 520.5 244.6 521.5 247.2 C522.5 249.9 521.9 254.1 520.1 255.9 C518.3 257.7 512.9 257.1 510.7 258.0 C508.5 259.0 508.9 261.0 507.1 261.6 C505.3 262.2 502.3 262.6 499.9 261.6 C497.5 260.7 495.1 257.1 492.7 255.9 C490.3 254.7 487.5 255.4 485.5 254.4 C483.5 253.5 481.7 251.9 480.5 250.1 C479.3 248.3 477.5 245.5 478.3 243.6Z" fill="#c2d588" opacity=".8"/>
<path d="M520.0 259.8 C520.5 256.1 521.3 254.1 524.0 252.8 C526.7 251.5 531.8 251.6 536.0 251.8 C540.2 252.0 544.3 254.5 549.0 253.8 C553.7 253.1 560.5 249.1 564.0 247.8 C567.5 246.5 567.3 245.5 570.0 245.8 C572.7 246.1 577.5 247.5 580.0 249.8 C582.5 252.1 585.0 256.5 585.0 259.8 C585.0 263.1 583.5 267.8 580.0 269.8 C576.5 271.8 568.3 271.0 564.0 271.8 C559.7 272.6 557.3 272.6 554.0 274.8 C550.7 277.0 548.2 283.0 544.0 284.8 C539.8 286.6 532.8 287.5 529.0 285.8 C525.2 284.1 522.5 279.1 521.0 274.8 C519.5 270.5 519.5 263.5 520.0 259.8Z" fill="#a9c264"/>
<path d="M520.0 258.0 C520.5 254.3 521.3 252.3 524.0 251.0 C526.7 249.7 531.8 249.8 536.0 250.0 C540.2 250.2 544.3 252.7 549.0 252.0 C553.7 251.3 560.5 247.3 564.0 246.0 C567.5 244.7 567.3 243.7 570.0 244.0 C572.7 244.3 577.5 245.7 580.0 248.0 C582.5 250.3 585.0 254.7 585.0 258.0 C585.0 261.3 583.5 266.0 580.0 268.0 C576.5 270.0 568.3 269.2 564.0 270.0 C559.7 270.8 557.3 270.8 554.0 273.0 C550.7 275.2 548.2 281.2 544.0 283.0 C539.8 284.8 532.8 285.7 529.0 284.0 C525.2 282.3 522.5 277.3 521.0 273.0 C519.5 268.7 519.5 261.7 520.0 258.0Z" fill="#b8cd78"/>
<path d="M529.8 256.9 C530.2 254.3 530.8 252.8 532.7 251.9 C534.6 250.9 538.3 251.0 541.3 251.2 C544.3 251.3 547.3 253.1 550.7 252.6 C554.0 252.1 559.0 249.2 561.5 248.3 C564.0 247.3 563.9 246.6 565.8 246.8 C567.7 247.1 571.2 248.0 573.0 249.7 C574.8 251.4 576.6 254.5 576.6 256.9 C576.6 259.3 575.5 262.7 573.0 264.1 C570.5 265.6 564.6 265.0 561.5 265.6 C558.4 266.2 556.7 266.2 554.3 267.7 C551.9 269.3 550.1 273.6 547.1 274.9 C544.1 276.2 539.0 276.8 536.3 275.6 C533.5 274.4 531.6 270.8 530.5 267.7 C529.4 264.6 529.4 259.6 529.8 256.9Z" fill="#c2d588" opacity=".8"/>
<text x="278" y="264" font-family="Liberation Sans" font-size="13.75" fill="#5f7667" text-anchor="middle">Підготував до заняття Тройна Антон</text>
<text x="277" y="280" font-family="Liberation Sans" font-size="13.75" fill="#5f7667" text-anchor="middle">Олександрович</text>
</svg> <!-- bottom toolbar -->
 <div class="a" style="left:0;top:446px;width:741px;height:38px;background:#000"></div>
 <svg style="left:29px;top:453px" width="12" height="16"><g fill="none" stroke="#e8e8e8" stroke-width="1.2"><rect x="3.2" y="0.8" width="5.6" height="9.5" rx="2.8"/><path d="M1 7 Q1 12.5 6 12.5 Q11 12.5 11 7 M6 12.5 V15 M3.5 15 H8.5"/></g></svg>
 <svg style="left:52px;top:457px" width="8" height="6"><path d="M1 4.5 L4 1.5 L7 4.5" fill="none" stroke="#ddd" stroke-width="1.1"/></svg>
 <div class="tbl" style="left:35px;top:472px">Звук</div>
 <svg style="left:87px;top:456px" width="18" height="10"><g fill="none" stroke="#e8e8e8" stroke-width="1.2"><rect x="0.8" y="0.8" width="11" height="8.4" rx="2"/><path d="M12 3.8 L16.5 1.2 V8.8 L12 6.2"/></g></svg>
 <svg style="left:116px;top:457px" width="8" height="6"><path d="M1 4.5 L4 1.5 L7 4.5" fill="none" stroke="#ddd" stroke-width="1.1"/></svg>
 <div class="tbl" style="left:96px;top:472px">Видео</div>
 <div class="a" style="left:408.5px;top:453px;width:16px;height:14.5px;background:#1fd68a;border-radius:3px"></div>
 <svg style="left:411px;top:455px" width="11" height="11"><path d="M5.5 1.5 L9 5 H6.8 V9.5 H4.2 V5 H2Z" fill="#000"/></svg>
 <svg style="left:437px;top:457px" width="8" height="6"><path d="M1 4.5 L4 1.5 L7 4.5" fill="none" stroke="#ddd" stroke-width="1.1"/></svg>
 <div class="t" style="left:397px;top:472px;font-size:8px;color:#fff">Поделиться</div>
 <svg style="left:499px;top:453px" width="13" height="15"><path d="M6.5 0.8 L12 3 V7 Q12 11.5 6.5 14 Q1 11.5 1 7 V3 Z" fill="none" stroke="#eee" stroke-width="1.2"/><path d="M6.5 2.5 V12.5 Q2.5 10.5 2.5 7 V4 Z" fill="#eee"/><path d="M6.5 7 H11 Q10.8 10 6.5 12.5Z" fill="#eee"/></svg>
 <div class="tbl" style="left:506px">Инструменты организатора</div>
 <svg style="left:588px;top:452px" width="18" height="18"><circle cx="9" cy="9" r="8" fill="none" stroke="#eee" stroke-width="1.2"/><g fill="#eee"><circle cx="5.4" cy="9" r="1.1"/><circle cx="9" cy="9" r="1.1"/><circle cx="12.6" cy="9" r="1.1"/></g></svg>
 <div class="tbl" style="left:597px">Дополнительно</div>
 <svg style="left:698px;top:452px" width="19" height="18"><path d="M5 1 H14 L18.2 9 L14 17 H5 L0.8 9 Z" fill="none" stroke="#e5245e" stroke-width="1.4"/><path d="M6.5 6 L12.5 12 M12.5 6 L6.5 12" stroke="#fff" stroke-width="2"/></svg>
 <div class="tbl" style="left:707.5px">Завершение</div>
<div class="a" style="left:746px;top:37px;width:233px;height:444px;background:#fff;border-radius:6px;overflow:hidden">
 <div class="a" style="left:3px;top:0;width:227px;height:31px;background:#eef1f5"></div>
 <div class="t" style="left:99px;top:12px;font-size:8.6px;font-weight:bold;color:#232333;transform:translateX(-50%)">Участники (11)</div>
 <svg style="left:197px;top:13px" width="10" height="10"><g fill="none" stroke="#555" stroke-width="1.1"><path d="M4 1 H1 V9 H9 V6"/><path d="M5.5 1 H9 V4.5 M9 1 L4.5 5.5"/></g></svg>
 <svg style="left:215px;top:13px" width="9" height="9"><path d="M1 1 L8 8 M8 1 L1 8" stroke="#555" stroke-width="1.1"/></svg>
 <div class="a" style="left:15px;top:38px;width:204px;height:20px;border:1px solid #c9cbd3;border-radius:5px"></div>
 <svg style="left:21px;top:43px" width="10" height="10"><circle cx="5.5" cy="4.5" r="3.3" fill="none" stroke="#777" stroke-width="1"/><path d="M3.2 6.8 L0.8 9.2" stroke="#777" stroke-width="1.1"/></svg>
 <div class="t" style="left:33px;top:44px;font-size:8px;color:#767676">Найти участника</div>
 <svg style="left:16.5px;top:65.2px" width="18" height="18"><defs><clipPath id="c0"><rect width="18" height="18" rx="4"/></clipPath></defs><g clip-path="url(#c0)"><rect width="18" height="18" fill="#f3f0ee"/><path d="M2 18 Q1 6 9 2 Q17 6 16 18Z" fill="#2a1f1c"/><ellipse cx="9" cy="9.5" rx="4.6" ry="5.8" fill="#e9c4b0"/><path d="M4.5 8 Q6 3 9 3 Q12 3 13.5 8 Q11 5 9 5 Q7 5 4.5 8Z" fill="#2a1f1c"/><path d="M3 18 Q9 14 15 18Z" fill="#c45a5a"/></g></svg>
 <div class="t" style="left:42px;top:70.7px;font-size:8px;color:#232333">Анна Анатоліївна Се...</div>
 <div class="t" style="left:129px;top:70.7px;font-size:8px;color:#232333">(Организатор, я)</div>
 <svg style="left:193px;top:68.2px" width="12" height="12"><g stroke="#888" stroke-width="1" fill="none"><rect x="4" y="0.8" width="3.6" height="6.4" rx="1.8"/><path d="M2.2 5.5 Q2.2 9.2 5.8 9.2 Q9.4 9.2 9.4 5.5 M5.8 9.2 V11.3 M3.8 11.3 H7.8"/></g></svg>
 <svg style="left:208px;top:68.2px" width="14" height="12"><g stroke="#888" stroke-width="1" fill="none"><rect x="0.8" y="2.8" width="8.4" height="7" rx="1"/><path d="M9.2 5 L12.6 3 V9.6 L9.2 7.6"/></g></svg>
 <div class="av" style="position:absolute;left:16.5px;top:91.9px;width:18px;height:18px;border-radius:4px;background:#2faa5a;color:#fff;font-size:8.5px;font-weight:bold;text-align:center;line-height:18px">A</div>
 <div class="t" style="left:42px;top:97.4px;font-size:8px;color:#232333">Антон Тройна</div>
 <div class="a" style="left:177.5px;top:97.9px;width:11px;height:6.5px;background:#1da24f;border-radius:1px"></div>
 <svg style="left:180.5px;top:97.9px" width="5" height="6"><path d="M2.5 0.8 L4.5 3 H3.2 V5.5 H1.8 V3 H0.5Z" fill="#fff"/></svg>
 <svg style="left:193px;top:94.9px" width="12" height="12"><g stroke="#777" stroke-width="1" fill="none"><rect x="4" y="0.8" width="3.6" height="6.4" rx="1.8" fill="#8a8a8a"/><path d="M2.2 5.5 Q2.2 9.2 5.8 9.2 Q9.4 9.2 9.4 5.5 M5.8 9.2 V11.3 M3.8 11.3 H7.8"/></g></svg>
 <svg style="left:208px;top:94.9px" width="14" height="12"><g stroke="#e8545a" stroke-width="1" fill="none"><rect x="0.8" y="2.8" width="8.4" height="7" rx="1"/><path d="M9.2 5 L12.6 3 V9.6 L9.2 7.6 M0.5 11.5 L12.5 0.8"/></g></svg>
 <svg style="left:16.5px;top:118.6px" width="18" height="18"><defs><clipPath id="c2"><rect width="18" height="18" rx="4"/></clipPath></defs><g clip-path="url(#c2)"><g transform="scale(0.383)"><rect width="47" height="47" fill="#4a403a"/><path d="M0 47 Q2 36 14 33 L23 40 L32 33 Q45 36 47 47Z" fill="#2c2c30"/><path d="M14 32 Q23 38 32 32 L29 42 L23 46 L17 42Z" fill="#f2f2f2"/><path d="M7 3 L17 13 L29 13 L40 3 L39 19 L8 19Z" fill="#b7b0a4"/><ellipse cx="23.5" cy="22" rx="16" ry="13" fill="#c2bcb0"/><ellipse cx="17" cy="21" rx="3.5" ry="3" fill="#f0ecd8"/><ellipse cx="30" cy="21" rx="3.5" ry="3" fill="#f0ecd8"/><circle cx="17" cy="21" r="2" fill="#3b3a28"/><circle cx="30" cy="21" r="2" fill="#3b3a28"/><ellipse cx="23.5" cy="30" rx="6" ry="3" fill="#e8e4dc"/></g></g></svg>
 <div class="t" style="left:42px;top:124.1px;font-size:8px;color:#232333">Аліна Качанова</div>
 <svg style="left:193px;top:121.6px" width="12" height="12"><g stroke="#e8545a" stroke-width="1" fill="none"><rect x="4" y="0.8" width="3.6" height="6.4" rx="1.8"/><path d="M2.2 5.5 Q2.2 9.2 5.8 9.2 Q9.4 9.2 9.4 5.5 M5.8 9.2 V11.3 M3.8 11.3 H7.8 M1 11 L10.5 0.8"/></g></svg>
 <svg style="left:208px;top:121.6px" width="14" height="12"><g stroke="#e8545a" stroke-width="1" fill="none"><rect x="0.8" y="2.8" width="8.4" height="7" rx="1"/><path d="M9.2 5 L12.6 3 V9.6 L9.2 7.6 M0.5 11.5 L12.5 0.8"/></g></svg>
 <svg style="left:16.5px;top:145.3px" width="18" height="18"><defs><clipPath id="c3"><rect width="18" height="18" rx="4"/></clipPath></defs><g clip-path="url(#c3)"><rect width="18" height="18" fill="#cfc9bd"/><path d="M7 7 Q11 2 18 4 V11 Q14 8 10 11Z" fill="#4a3f36"/><ellipse cx="13" cy="12.5" rx="5" ry="4.3" fill="#e2c4b2"/><path d="M0 0 H18 V3 Q10 0 3 3Z" fill="#a19a88"/></g></svg>
 <div class="t" style="left:42px;top:150.8px;font-size:8px;color:#232333">Валентина Валеріївна Фивчук</div>
 <svg style="left:193px;top:148.3px" width="12" height="12"><g stroke="#e8545a" stroke-width="1" fill="none"><rect x="4" y="0.8" width="3.6" height="6.4" rx="1.8"/><path d="M2.2 5.5 Q2.2 9.2 5.8 9.2 Q9.4 9.2 9.4 5.5 M5.8 9.2 V11.3 M3.8 11.3 H7.8 M1 11 L10.5 0.8"/></g></svg>
 <svg style="left:208px;top:148.3px" width="14" height="12"><g stroke="#e8545a" stroke-width="1" fill="none"><rect x="0.8" y="2.8" width="8.4" height="7" rx="1"/><path d="M9.2 5 L12.6 3 V9.6 L9.2 7.6 M0.5 11.5 L12.5 0.8"/></g></svg>
 <div class="av" style="position:absolute;left:16.5px;top:172.0px;width:18px;height:18px;border-radius:4px;background:#5e3b2a;color:#fff;font-size:11.5px;font-weight:normal;text-align:center;line-height:18px">Д</div>
 <div class="t" style="left:42px;top:177.5px;font-size:8px;color:#232333">Даніл Іванов</div>
 <svg style="left:193px;top:175.0px" width="12" height="12"><g stroke="#e8545a" stroke-width="1" fill="none"><rect x="4" y="0.8" width="3.6" height="6.4" rx="1.8"/><path d="M2.2 5.5 Q2.2 9.2 5.8 9.2 Q9.4 9.2 9.4 5.5 M5.8 9.2 V11.3 M3.8 11.3 H7.8 M1 11 L10.5 0.8"/></g></svg>
 <svg style="left:208px;top:175.0px" width="14" height="12"><g stroke="#e8545a" stroke-width="1" fill="none"><rect x="0.8" y="2.8" width="8.4" height="7" rx="1"/><path d="M9.2 5 L12.6 3 V9.6 L9.2 7.6 M0.5 11.5 L12.5 0.8"/></g></svg>
 <div class="av" style="position:absolute;left:16.5px;top:198.7px;width:18px;height:18px;border-radius:4px;background:#1d9d7d;color:#fff;font-size:8.5px;font-weight:bold;text-align:center;line-height:18px">є</div>
 <div class="t" style="left:42px;top:204.2px;font-size:8px;color:#232333">Єва Бризгун</div>
 <svg style="left:193px;top:201.7px" width="12" height="12"><g stroke="#e8545a" stroke-width="1" fill="none"><rect x="4" y="0.8" width="3.6" height="6.4" rx="1.8"/><path d="M2.2 5.5 Q2.2 9.2 5.8 9.2 Q9.4 9.2 9.4 5.5 M5.8 9.2 V11.3 M3.8 11.3 H7.8 M1 11 L10.5 0.8"/></g></svg>
 <svg style="left:208px;top:201.7px" width="14" height="12"><g stroke="#e8545a" stroke-width="1" fill="none"><rect x="0.8" y="2.8" width="8.4" height="7" rx="1"/><path d="M9.2 5 L12.6 3 V9.6 L9.2 7.6 M0.5 11.5 L12.5 0.8"/></g></svg>
 <div class="av" style="position:absolute;left:16.5px;top:225.4px;width:18px;height:18px;border-radius:4px;background:#f07300;color:#fff;font-size:11.5px;font-weight:normal;text-align:center;line-height:18px">Є</div>
 <div class="t" style="left:42px;top:230.9px;font-size:8px;color:#232333">Євгенія Вікторівна Овдієнко</div>
 <svg style="left:193px;top:228.4px" width="12" height="12"><g stroke="#e8545a" stroke-width="1" fill="none"><rect x="4" y="0.8" width="3.6" height="6.4" rx="1.8"/><path d="M2.2 5.5 Q2.2 9.2 5.8 9.2 Q9.4 9.2 9.4 5.5 M5.8 9.2 V11.3 M3.8 11.3 H7.8 M1 11 L10.5 0.8"/></g></svg>
 <svg style="left:208px;top:228.4px" width="14" height="12"><g stroke="#e8545a" stroke-width="1" fill="none"><rect x="0.8" y="2.8" width="8.4" height="7" rx="1"/><path d="M9.2 5 L12.6 3 V9.6 L9.2 7.6 M0.5 11.5 L12.5 0.8"/></g></svg>
 <div class="av" style="position:absolute;left:16.5px;top:252.1px;width:18px;height:18px;border-radius:4px;background:#2c7bc6;color:#fff;font-size:8.5px;font-weight:bold;text-align:center;line-height:18px">к</div>
 <div class="t" style="left:42px;top:257.6px;font-size:8px;color:#232333">Катя Черкай</div>
 <svg style="left:193px;top:255.1px" width="12" height="12"><g stroke="#e8545a" stroke-width="1" fill="none"><rect x="4" y="0.8" width="3.6" height="6.4" rx="1.8"/><path d="M2.2 5.5 Q2.2 9.2 5.8 9.2 Q9.4 9.2 9.4 5.5 M5.8 9.2 V11.3 M3.8 11.3 H7.8 M1 11 L10.5 0.8"/></g></svg>
 <svg style="left:208px;top:255.1px" width="14" height="12"><g stroke="#e8545a" stroke-width="1" fill="none"><rect x="0.8" y="2.8" width="8.4" height="7" rx="1"/><path d="M9.2 5 L12.6 3 V9.6 L9.2 7.6 M0.5 11.5 L12.5 0.8"/></g></svg>
 <div class="av" style="position:absolute;left:16.5px;top:278.8px;width:18px;height:18px;border-radius:4px;background:#c4392f;color:#fff;font-size:8.5px;font-weight:bold;text-align:center;line-height:18px">м</div>
 <div class="t" style="left:42px;top:284.3px;font-size:8px;color:#232333">Марина Малишева</div>
 <svg style="left:193px;top:281.8px" width="12" height="12"><g stroke="#e8545a" stroke-width="1" fill="none"><rect x="4" y="0.8" width="3.6" height="6.4" rx="1.8"/><path d="M2.2 5.5 Q2.2 9.2 5.8 9.2 Q9.4 9.2 9.4 5.5 M5.8 9.2 V11.3 M3.8 11.3 H7.8 M1 11 L10.5 0.8"/></g></svg>
 <svg style="left:208px;top:281.8px" width="14" height="12"><g stroke="#e8545a" stroke-width="1" fill="none"><rect x="0.8" y="2.8" width="8.4" height="7" rx="1"/><path d="M9.2 5 L12.6 3 V9.6 L9.2 7.6 M0.5 11.5 L12.5 0.8"/></g></svg>
 <div class="av" style="position:absolute;left:16.5px;top:305.5px;width:18px;height:18px;border-radius:4px;background:#ea3f7a;color:#fff;font-size:11.5px;font-weight:normal;text-align:center;line-height:18px">М</div>
 <div class="t" style="left:42px;top:311.0px;font-size:8px;color:#232333">Михайло Науменко</div>
 <svg style="left:193px;top:308.5px" width="12" height="12"><g stroke="#e8545a" stroke-width="1" fill="none"><rect x="4" y="0.8" width="3.6" height="6.4" rx="1.8"/><path d="M2.2 5.5 Q2.2 9.2 5.8 9.2 Q9.4 9.2 9.4 5.5 M5.8 9.2 V11.3 M3.8 11.3 H7.8 M1 11 L10.5 0.8"/></g></svg>
 <svg style="left:208px;top:308.5px" width="14" height="12"><g stroke="#e8545a" stroke-width="1" fill="none"><rect x="0.8" y="2.8" width="8.4" height="7" rx="1"/><path d="M9.2 5 L12.6 3 V9.6 L9.2 7.6 M0.5 11.5 L12.5 0.8"/></g></svg>
 <div class="av" style="position:absolute;left:16.5px;top:332.2px;width:18px;height:18px;border-radius:4px;background:#2c7bc6;color:#fff;font-size:8.5px;font-weight:bold;text-align:center;line-height:18px">о</div>
 <div class="t" style="left:42px;top:337.7px;font-size:8px;color:#232333">Олександр Сичов</div>
 <svg style="left:193px;top:335.2px" width="12" height="12"><g stroke="#e8545a" stroke-width="1" fill="none"><rect x="4" y="0.8" width="3.6" height="6.4" rx="1.8"/><path d="M2.2 5.5 Q2.2 9.2 5.8 9.2 Q9.4 9.2 9.4 5.5 M5.8 9.2 V11.3 M3.8 11.3 H7.8 M1 11 L10.5 0.8"/></g></svg>
 <svg style="left:208px;top:335.2px" width="14" height="12"><g stroke="#e8545a" stroke-width="1" fill="none"><rect x="0.8" y="2.8" width="8.4" height="7" rx="1"/><path d="M9.2 5 L12.6 3 V9.6 L9.2 7.6 M0.5 11.5 L12.5 0.8"/></g></svg>
 <div class="a" style="left:3px;top:395px;width:227px;height:1px;background:#eceef1"></div>
 <div class="a" style="left:14px;top:416.5px;width:58.5px;height:15px;border:1px solid #c9cbd3;border-radius:5px;font-size:8px;color:#232333;text-align:center;line-height:13px">Пригласить</div>
 <div class="a" style="left:83.5px;top:416.5px;width:110px;height:15px;border:1px solid #c9cbd3;border-radius:5px;font-size:8px;color:#232333;text-align:center;line-height:13px">Выключить звук для всех</div>
 <div class="a" style="left:204.5px;top:416.5px;width:16px;height:15px;border:1px solid #c9cbd3;border-radius:5px;font-size:8px;color:#232333;text-align:center;line-height:11px;font-weight:bold">···</div>
</div></div>
<!-- ===== taskbar popup ===== -->
<div class="a" style="left:184.5px;top:442.5px;width:234px;height:97px;background:linear-gradient(105deg,#2e2f2d 0%,#30312f 28%,#474845 42%,#363734 55%,#333432 100%)"></div>
<svg style="left:190px;top:448px" width="9" height="10"><path d="M3 0.5 H6 V5 H8.5 L4.5 9.5 L0.5 5 H3Z" fill="#3d94e6"/></svg>
<div class="t" style="left:204.5px;top:450px;font-size:8px;color:#f0f0f0">Загрузки</div>
<svg style="left:331px;top:448px" width="8" height="10"><path d="M0.5 1 H3.5 L4.5 2 H7.5 V9.5 H0.5Z" fill="#f6c94a"/><path d="M0.5 3 H7.5" stroke="#d9a520" stroke-width=".8"/></svg>
<div class="t" style="left:345.5px;top:450px;font-size:8px;color:#f0f0f0">2026-03-04 15.02....</div>
<!-- thumbnail 1 -->
<div class="a" style="left:188.5px;top:463.5px;width:130.5px;height:70px;background:#fff;overflow:hidden">
 <div class="a" style="left:0;top:0;width:131px;height:3px;background:#f2f2f2"></div>
 <div class="a" style="left:104px;top:7px;width:27px;height:23px;background:#000"></div>
 <div class="a" style="left:104px;top:45px;width:27px;height:25px;background:#000"></div>
 <div class="a" style="left:120px;top:31px;width:11px;height:13px;background:#7aa048"></div>
 <svg style="left:0;top:0" width="131" height="70">
  <g fill="#999"><rect x="3" y="8" width="16" height="1" /><rect x="3" y="12" width="12" height="1"/><rect x="3" y="16" width="18" height="1"/><rect x="2" y="19" width="20" height="3" fill="#e6e6e6"/><rect x="3" y="24" width="16" height="1"/><rect x="3" y="28" width="10" height="1"/></g><rect x="27.0" y="7" width="4" height="5" fill="#eef0f2" stroke="#c8c8c8" stroke-width=".4"/><rect x="27.5" y="8" width="2.2" height="2.2" fill="#c9a24a" opacity=".75"/><rect x="26.5" y="13" width="5" height=".8" fill="#bbb"/><rect x="33.5" y="7" width="4" height="5" fill="#eef0f2" stroke="#c8c8c8" stroke-width=".4"/><rect x="34.0" y="8" width="2.2" height="2.2" fill="#8a9a6a" opacity=".75"/><rect x="33.0" y="13" width="5" height=".8" fill="#bbb"/><rect x="40.0" y="7" width="4" height="5" fill="#eef0f2" stroke="#c8c8c8" stroke-width=".4"/><rect x="40.5" y="8" width="2.2" height="2.2" fill="#8a9a6a" opacity=".75"/><rect x="39.5" y="13" width="5" height=".8" fill="#bbb"/><rect x="46.5" y="7" width="4" height="5" fill="#eef0f2" stroke="#c8c8c8" stroke-width=".4"/><rect x="47.0" y="8" width="2.2" height="2.2" fill="#c9a24a" opacity=".75"/><rect x="46.0" y="13" width="5" height=".8" fill="#bbb"/><rect x="53.0" y="7" width="4" height="5" fill="#eef0f2" stroke="#c8c8c8" stroke-width=".4"/><rect x="53.5" y="8" width="2.2" height="2.2" fill="#4a78c0" opacity=".75"/><rect x="52.5" y="13" width="5" height=".8" fill="#bbb"/><rect x="59.5" y="7" width="4" height="5" fill="#eef0f2" stroke="#c8c8c8" stroke-width=".4"/><rect x="60.0" y="8" width="2.2" height="2.2" fill="#6a8fc8" opacity=".75"/><rect x="59.0" y="13" width="5" height=".8" fill="#bbb"/><rect x="66.0" y="7" width="4" height="5" fill="#eef0f2" stroke="#c8c8c8" stroke-width=".4"/><rect x="66.5" y="8" width="2.2" height="2.2" fill="#e04040" opacity=".75"/><rect x="65.5" y="13" width="5" height=".8" fill="#bbb"/><rect x="72.5" y="7" width="4" height="5" fill="#eef0f2" stroke="#c8c8c8" stroke-width=".4"/><rect x="73.0" y="8" width="2.2" height="2.2" fill="#4a78c0" opacity=".75"/><rect x="72.0" y="13" width="5" height=".8" fill="#bbb"/><rect x="79.0" y="7" width="4" height="5" fill="#eef0f2" stroke="#c8c8c8" stroke-width=".4"/><rect x="79.5" y="8" width="2.2" height="2.2" fill="#e04040" opacity=".75"/><rect x="78.5" y="13" width="5" height=".8" fill="#bbb"/><rect x="85.5" y="7" width="4" height="5" fill="#eef0f2" stroke="#c8c8c8" stroke-width=".4"/><rect x="86.0" y="8" width="2.2" height="2.2" fill="#4a78c0" opacity=".75"/><rect x="85.0" y="13" width="5" height=".8" fill="#bbb"/><rect x="92.0" y="7" width="4" height="5" fill="#eef0f2" stroke="#c8c8c8" stroke-width=".4"/><rect x="92.5" y="8" width="2.2" height="2.2" fill="#8a9a6a" opacity=".75"/><rect x="91.5" y="13" width="5" height=".8" fill="#bbb"/><rect x="98.5" y="7" width="4" height="5" fill="#eef0f2" stroke="#c8c8c8" stroke-width=".4"/><rect x="99.0" y="8" width="2.2" height="2.2" fill="#6a8fc8" opacity=".75"/><rect x="98.0" y="13" width="5" height=".8" fill="#bbb"/><rect x="27.0" y="16" width="4" height="5" fill="#eef0f2" stroke="#c8c8c8" stroke-width=".4"/><rect x="27.5" y="17" width="2.2" height="2.2" fill="#e04040" opacity=".75"/><rect x="26.5" y="22" width="5" height=".8" fill="#bbb"/><rect x="33.5" y="16" width="4" height="5" fill="#eef0f2" stroke="#c8c8c8" stroke-width=".4"/><rect x="34.0" y="17" width="2.2" height="2.2" fill="#6a8fc8" opacity=".75"/><rect x="33.0" y="22" width="5" height=".8" fill="#bbb"/><rect x="40.0" y="16" width="4" height="5" fill="#eef0f2" stroke="#c8c8c8" stroke-width=".4"/><rect x="40.5" y="17" width="2.2" height="2.2" fill="#c9a24a" opacity=".75"/><rect x="39.5" y="22" width="5" height=".8" fill="#bbb"/><rect x="46.5" y="16" width="4" height="5" fill="#eef0f2" stroke="#c8c8c8" stroke-width=".4"/><rect x="47.0" y="17" width="2.2" height="2.2" fill="#4a78c0" opacity=".75"/><rect x="46.0" y="22" width="5" height=".8" fill="#bbb"/><rect x="53.0" y="16" width="4" height="5" fill="#eef0f2" stroke="#c8c8c8" stroke-width=".4"/><rect x="53.5" y="17" width="2.2" height="2.2" fill="#c9a24a" opacity=".75"/><rect x="52.5" y="22" width="5" height=".8" fill="#bbb"/><rect x="59.5" y="16" width="4" height="5" fill="#eef0f2" stroke="#c8c8c8" stroke-width=".4"/><rect x="60.0" y="17" width="2.2" height="2.2" fill="#e04040" opacity=".75"/><rect x="59.0" y="22" width="5" height=".8" fill="#bbb"/><rect x="66.0" y="16" width="4" height="5" fill="#eef0f2" stroke="#c8c8c8" stroke-width=".4"/><rect x="66.5" y="17" width="2.2" height="2.2" fill="#4a78c0" opacity=".75"/><rect x="65.5" y="22" width="5" height=".8" fill="#bbb"/><rect x="72.5" y="16" width="4" height="5" fill="#eef0f2" stroke="#c8c8c8" stroke-width=".4"/><rect x="73.0" y="17" width="2.2" height="2.2" fill="#e04040" opacity=".75"/><rect x="72.0" y="22" width="5" height=".8" fill="#bbb"/><rect x="79.0" y="16" width="4" height="5" fill="#eef0f2" stroke="#c8c8c8" stroke-width=".4"/><rect x="79.5" y="17" width="2.2" height="2.2" fill="#6a8fc8" opacity=".75"/><rect x="78.5" y="22" width="5" height=".8" fill="#bbb"/><rect x="85.5" y="16" width="4" height="5" fill="#eef0f2" stroke="#c8c8c8" stroke-width=".4"/><rect x="86.0" y="17" width="2.2" height="2.2" fill="#8a9a6a" opacity=".75"/><rect x="85.0" y="22" width="5" height=".8" fill="#bbb"/><rect x="92.0" y="16" width="4" height="5" fill="#eef0f2" stroke="#c8c8c8" stroke-width=".4"/><rect x="92.5" y="17" width="2.2" height="2.2" fill="#e04040" opacity=".75"/><rect x="91.5" y="22" width="5" height=".8" fill="#bbb"/><rect x="98.5" y="16" width="4" height="5" fill="#eef0f2" stroke="#c8c8c8" stroke-width=".4"/><rect x="99.0" y="17" width="2.2" height="2.2" fill="#6a8fc8" opacity=".75"/><rect x="98.0" y="22" width="5" height=".8" fill="#bbb"/><rect x="27.0" y="25" width="4" height="5" fill="#eef0f2" stroke="#c8c8c8" stroke-width=".4"/><rect x="27.5" y="26" width="2.2" height="2.2" fill="#e04040" opacity=".75"/><rect x="26.5" y="31" width="5" height=".8" fill="#bbb"/><rect x="33.5" y="25" width="4" height="5" fill="#eef0f2" stroke="#c8c8c8" stroke-width=".4"/><rect x="34.0" y="26" width="2.2" height="2.2" fill="#4a78c0" opacity=".75"/><rect x="33.0" y="31" width="5" height=".8" fill="#bbb"/><rect x="40.0" y="25" width="4" height="5" fill="#eef0f2" stroke="#c8c8c8" stroke-width=".4"/><rect x="40.5" y="26" width="2.2" height="2.2" fill="#e04040" opacity=".75"/><rect x="39.5" y="31" width="5" height=".8" fill="#bbb"/><rect x="46.5" y="25" width="4" height="5" fill="#eef0f2" stroke="#c8c8c8" stroke-width=".4"/><rect x="47.0" y="26" width="2.2" height="2.2" fill="#c9a24a" opacity=".75"/><rect x="46.0" y="31" width="5" height=".8" fill="#bbb"/><rect x="53.0" y="25" width="4" height="5" fill="#eef0f2" stroke="#c8c8c8" stroke-width=".4"/><rect x="53.5" y="26" width="2.2" height="2.2" fill="#c9a24a" opacity=".75"/><rect x="52.5" y="31" width="5" height=".8" fill="#bbb"/><rect x="59.5" y="25" width="4" height="5" fill="#eef0f2" stroke="#c8c8c8" stroke-width=".4"/><rect x="60.0" y="26" width="2.2" height="2.2" fill="#6a8fc8" opacity=".75"/><rect x="59.0" y="31" width="5" height=".8" fill="#bbb"/><rect x="66.0" y="25" width="4" height="5" fill="#eef0f2" stroke="#c8c8c8" stroke-width=".4"/><rect x="66.5" y="26" width="2.2" height="2.2" fill="#e04040" opacity=".75"/><rect x="65.5" y="31" width="5" height=".8" fill="#bbb"/><rect x="72.5" y="25" width="4" height="5" fill="#eef0f2" stroke="#c8c8c8" stroke-width=".4"/><rect x="73.0" y="26" width="2.2" height="2.2" fill="#e04040" opacity=".75"/><rect x="72.0" y="31" width="5" height=".8" fill="#bbb"/><rect x="79.0" y="25" width="4" height="5" fill="#eef0f2" stroke="#c8c8c8" stroke-width=".4"/><rect x="79.5" y="26" width="2.2" height="2.2" fill="#4a78c0" opacity=".75"/><rect x="78.5" y="31" width="5" height=".8" fill="#bbb"/><rect x="85.5" y="25" width="4" height="5" fill="#eef0f2" stroke="#c8c8c8" stroke-width=".4"/><rect x="86.0" y="26" width="2.2" height="2.2" fill="#4a78c0" opacity=".75"/><rect x="85.0" y="31" width="5" height=".8" fill="#bbb"/><rect x="92.0" y="25" width="4" height="5" fill="#eef0f2" stroke="#c8c8c8" stroke-width=".4"/><rect x="92.5" y="26" width="2.2" height="2.2" fill="#e04040" opacity=".75"/><rect x="91.5" y="31" width="5" height=".8" fill="#bbb"/><rect x="98.5" y="25" width="4" height="5" fill="#eef0f2" stroke="#c8c8c8" stroke-width=".4"/><rect x="99.0" y="26" width="2.2" height="2.2" fill="#e04040" opacity=".75"/><rect x="98.0" y="31" width="5" height=".8" fill="#bbb"/><rect x="27.0" y="34" width="4" height="5" fill="#eef0f2" stroke="#c8c8c8" stroke-width=".4"/><rect x="27.5" y="35" width="2.2" height="2.2" fill="#e04040" opacity=".75"/><rect x="26.5" y="40" width="5" height=".8" fill="#bbb"/><rect x="33.5" y="34" width="4" height="5" fill="#eef0f2" stroke="#c8c8c8" stroke-width=".4"/><rect x="34.0" y="35" width="2.2" height="2.2" fill="#e04040" opacity=".75"/><rect x="33.0" y="40" width="5" height=".8" fill="#bbb"/><rect x="40.0" y="34" width="4" height="5" fill="#eef0f2" stroke="#c8c8c8" stroke-width=".4"/><rect x="40.5" y="35" width="2.2" height="2.2" fill="#8a9a6a" opacity=".75"/><rect x="39.5" y="40" width="5" height=".8" fill="#bbb"/><rect x="46.5" y="34" width="4" height="5" fill="#eef0f2" stroke="#c8c8c8" stroke-width=".4"/><rect x="47.0" y="35" width="2.2" height="2.2" fill="#8a9a6a" opacity=".75"/><rect x="46.0" y="40" width="5" height=".8" fill="#bbb"/><rect x="53.0" y="34" width="4" height="5" fill="#eef0f2" stroke="#c8c8c8" stroke-width=".4"/><rect x="53.5" y="35" width="2.2" height="2.2" fill="#e04040" opacity=".75"/><rect x="52.5" y="40" width="5" height=".8" fill="#bbb"/><rect x="59.5" y="34" width="4" height="5" fill="#eef0f2" stroke="#c8c8c8" stroke-width=".4"/><rect x="60.0" y="35" width="2.2" height="2.2" fill="#c9a24a" opacity=".75"/><rect x="59.0" y="40" width="5" height=".8" fill="#bbb"/><rect x="66.0" y="34" width="4" height="5" fill="#eef0f2" stroke="#c8c8c8" stroke-width=".4"/><rect x="66.5" y="35" width="2.2" height="2.2" fill="#e04040" opacity=".75"/><rect x="65.5" y="40" width="5" height=".8" fill="#bbb"/><rect x="72.5" y="34" width="4" height="5" fill="#eef0f2" stroke="#c8c8c8" stroke-width=".4"/><rect x="73.0" y="35" width="2.2" height="2.2" fill="#e04040" opacity=".75"/><rect x="72.0" y="40" width="5" height=".8" fill="#bbb"/><rect x="79.0" y="34" width="4" height="5" fill="#eef0f2" stroke="#c8c8c8" stroke-width=".4"/><rect x="79.5" y="35" width="2.2" height="2.2" fill="#e04040" opacity=".75"/><rect x="78.5" y="40" width="5" height=".8" fill="#bbb"/><rect x="85.5" y="34" width="4" height="5" fill="#eef0f2" stroke="#c8c8c8" stroke-width=".4"/><rect x="86.0" y="35" width="2.2" height="2.2" fill="#6a8fc8" opacity=".75"/><rect x="85.0" y="40" width="5" height=".8" fill="#bbb"/><rect x="92.0" y="34" width="4" height="5" fill="#eef0f2" stroke="#c8c8c8" stroke-width=".4"/><rect x="92.5" y="35" width="2.2" height="2.2" fill="#8a9a6a" opacity=".75"/><rect x="91.5" y="40" width="5" height=".8" fill="#bbb"/><rect x="98.5" y="34" width="4" height="5" fill="#eef0f2" stroke="#c8c8c8" stroke-width=".4"/><rect x="99.0" y="35" width="2.2" height="2.2" fill="#4a78c0" opacity=".75"/><rect x="98.0" y="40" width="5" height=".8" fill="#bbb"/><rect x="27.0" y="43" width="4" height="5" fill="#eef0f2" stroke="#c8c8c8" stroke-width=".4"/><rect x="27.5" y="44" width="2.2" height="2.2" fill="#8a9a6a" opacity=".75"/><rect x="26.5" y="49" width="5" height=".8" fill="#bbb"/><rect x="33.5" y="43" width="4" height="5" fill="#eef0f2" stroke="#c8c8c8" stroke-width=".4"/><rect x="34.0" y="44" width="2.2" height="2.2" fill="#6a8fc8" opacity=".75"/><rect x="33.0" y="49" width="5" height=".8" fill="#bbb"/><rect x="40.0" y="43" width="4" height="5" fill="#eef0f2" stroke="#c8c8c8" stroke-width=".4"/><rect x="40.5" y="44" width="2.2" height="2.2" fill="#e04040" opacity=".75"/><rect x="39.5" y="49" width="5" height=".8" fill="#bbb"/><rect x="46.5" y="43" width="4" height="5" fill="#eef0f2" stroke="#c8c8c8" stroke-width=".4"/><rect x="47.0" y="44" width="2.2" height="2.2" fill="#e04040" opacity=".75"/><rect x="46.0" y="49" width="5" height=".8" fill="#bbb"/><rect x="53.0" y="43" width="4" height="5" fill="#eef0f2" stroke="#c8c8c8" stroke-width=".4"/><rect x="53.5" y="44" width="2.2" height="2.2" fill="#8a9a6a" opacity=".75"/><rect x="52.5" y="49" width="5" height=".8" fill="#bbb"/><rect x="59.5" y="43" width="4" height="5" fill="#eef0f2" stroke="#c8c8c8" stroke-width=".4"/><rect x="60.0" y="44" width="2.2" height="2.2" fill="#4a78c0" opacity=".75"/><rect x="59.0" y="49" width="5" height=".8" fill="#bbb"/><rect x="66.0" y="43" width="4" height="5" fill="#eef0f2" stroke="#c8c8c8" stroke-width=".4"/><rect x="66.5" y="44" width="2.2" height="2.2" fill="#8a9a6a" opacity=".75"/><rect x="65.5" y="49" width="5" height=".8" fill="#bbb"/><rect x="72.5" y="43" width="4" height="5" fill="#eef0f2" stroke="#c8c8c8" stroke-width=".4"/><rect x="73.0" y="44" width="2.2" height="2.2" fill="#8a9a6a" opacity=".75"/><rect x="72.0" y="49" width="5" height=".8" fill="#bbb"/><rect x="79.0" y="43" width="4" height="5" fill="#eef0f2" stroke="#c8c8c8" stroke-width=".4"/><rect x="79.5" y="44" width="2.2" height="2.2" fill="#c9a24a" opacity=".75"/><rect x="78.5" y="49" width="5" height=".8" fill="#bbb"/><rect x="85.5" y="43" width="4" height="5" fill="#eef0f2" stroke="#c8c8c8" stroke-width=".4"/><rect x="86.0" y="44" width="2.2" height="2.2" fill="#c9a24a" opacity=".75"/><rect x="85.0" y="49" width="5" height=".8" fill="#bbb"/><rect x="92.0" y="43" width="4" height="5" fill="#eef0f2" stroke="#c8c8c8" stroke-width=".4"/><rect x="92.5" y="44" width="2.2" height="2.2" fill="#4a78c0" opacity=".75"/><rect x="91.5" y="49" width="5" height=".8" fill="#bbb"/><rect x="98.5" y="43" width="4" height="5" fill="#eef0f2" stroke="#c8c8c8" stroke-width=".4"/><rect x="99.0" y="44" width="2.2" height="2.2" fill="#c9a24a" opacity=".75"/><rect x="98.0" y="49" width="5" height=".8" fill="#bbb"/><rect x="27.0" y="52" width="4" height="5" fill="#eef0f2" stroke="#c8c8c8" stroke-width=".4"/><rect x="27.5" y="53" width="2.2" height="2.2" fill="#8a9a6a" opacity=".75"/><rect x="26.5" y="58" width="5" height=".8" fill="#bbb"/><rect x="33.5" y="52" width="4" height="5" fill="#eef0f2" stroke="#c8c8c8" stroke-width=".4"/><rect x="34.0" y="53" width="2.2" height="2.2" fill="#4a78c0" opacity=".75"/><rect x="33.0" y="58" width="5" height=".8" fill="#bbb"/><rect x="40.0" y="52" width="4" height="5" fill="#eef0f2" stroke="#c8c8c8" stroke-width=".4"/><rect x="40.5" y="53" width="2.2" height="2.2" fill="#8a9a6a" opacity=".75"/><rect x="39.5" y="58" width="5" height=".8" fill="#bbb"/><rect x="46.5" y="52" width="4" height="5" fill="#eef0f2" stroke="#c8c8c8" stroke-width=".4"/><rect x="47.0" y="53" width="2.2" height="2.2" fill="#8a9a6a" opacity=".75"/><rect x="46.0" y="58" width="5" height=".8" fill="#bbb"/><rect x="53.0" y="52" width="4" height="5" fill="#eef0f2" stroke="#c8c8c8" stroke-width=".4"/><rect x="53.5" y="53" width="2.2" height="2.2" fill="#8a9a6a" opacity=".75"/><rect x="52.5" y="58" width="5" height=".8" fill="#bbb"/><rect x="59.5" y="52" width="4" height="5" fill="#eef0f2" stroke="#c8c8c8" stroke-width=".4"/><rect x="60.0" y="53" width="2.2" height="2.2" fill="#6a8fc8" opacity=".75"/><rect x="59.0" y="58" width="5" height=".8" fill="#bbb"/><rect x="66.0" y="52" width="4" height="5" fill="#eef0f2" stroke="#c8c8c8" stroke-width=".4"/><rect x="66.5" y="53" width="2.2" height="2.2" fill="#8a9a6a" opacity=".75"/><rect x="65.5" y="58" width="5" height=".8" fill="#bbb"/><rect x="72.5" y="52" width="4" height="5" fill="#eef0f2" stroke="#c8c8c8" stroke-width=".4"/><rect x="73.0" y="53" width="2.2" height="2.2" fill="#e04040" opacity=".75"/><rect x="72.0" y="58" width="5" height=".8" fill="#bbb"/><rect x="79.0" y="52" width="4" height="5" fill="#eef0f2" stroke="#c8c8c8" stroke-width=".4"/><rect x="79.5" y="53" width="2.2" height="2.2" fill="#6a8fc8" opacity=".75"/><rect x="78.5" y="58" width="5" height=".8" fill="#bbb"/><rect x="85.5" y="52" width="4" height="5" fill="#eef0f2" stroke="#c8c8c8" stroke-width=".4"/><rect x="86.0" y="53" width="2.2" height="2.2" fill="#6a8fc8" opacity=".75"/><rect x="85.0" y="58" width="5" height=".8" fill="#bbb"/><rect x="92.0" y="52" width="4" height="5" fill="#eef0f2" stroke="#c8c8c8" stroke-width=".4"/><rect x="92.5" y="53" width="2.2" height="2.2" fill="#e04040" opacity=".75"/><rect x="91.5" y="58" width="5" height=".8" fill="#bbb"/><rect x="98.5" y="52" width="4" height="5" fill="#eef0f2" stroke="#c8c8c8" stroke-width=".4"/><rect x="99.0" y="53" width="2.2" height="2.2" fill="#4a78c0" opacity=".75"/><rect x="98.0" y="58" width="5" height=".8" fill="#bbb"/><rect x="27.0" y="61" width="4" height="5" fill="#eef0f2" stroke="#c8c8c8" stroke-width=".4"/><rect x="27.5" y="62" width="2.2" height="2.2" fill="#8a9a6a" opacity=".75"/><rect x="26.5" y="67" width="5" height=".8" fill="#bbb"/><rect x="33.5" y="61" width="4" height="5" fill="#eef0f2" stroke="#c8c8c8" stroke-width=".4"/><rect x="34.0" y="62" width="2.2" height="2.2" fill="#4a78c0" opacity=".75"/><rect x="33.0" y="67" width="5" height=".8" fill="#bbb"/><rect x="40.0" y="61" width="4" height="5" fill="#eef0f2" stroke="#c8c8c8" stroke-width=".4"/><rect x="40.5" y="62" width="2.2" height="2.2" fill="#8a9a6a" opacity=".75"/><rect x="39.5" y="67" width="5" height=".8" fill="#bbb"/><rect x="46.5" y="61" width="4" height="5" fill="#eef0f2" stroke="#c8c8c8" stroke-width=".4"/><rect x="47.0" y="62" width="2.2" height="2.2" fill="#6a8fc8" opacity=".75"/><rect x="46.0" y="67" width="5" height=".8" fill="#bbb"/><rect x="53.0" y="61" width="4" height="5" fill="#eef0f2" stroke="#c8c8c8" stroke-width=".4"/><rect x="53.5" y="62" width="2.2" height="2.2" fill="#4a78c0" opacity=".75"/><rect x="52.5" y="67" width="5" height=".8" fill="#bbb"/><rect x="59.5" y="61" width="4" height="5" fill="#eef0f2" stroke="#c8c8c8" stroke-width=".4"/><rect x="60.0" y="62" width="2.2" height="2.2" fill="#c9a24a" opacity=".75"/><rect x="59.0" y="67" width="5" height=".8" fill="#bbb"/><rect x="66.0" y="61" width="4" height="5" fill="#eef0f2" stroke="#c8c8c8" stroke-width=".4"/><rect x="66.5" y="62" width="2.2" height="2.2" fill="#6a8fc8" opacity=".75"/><rect x="65.5" y="67" width="5" height=".8" fill="#bbb"/><rect x="72.5" y="61" width="4" height="5" fill="#eef0f2" stroke="#c8c8c8" stroke-width=".4"/><rect x="73.0" y="62" width="2.2" height="2.2" fill="#8a9a6a" opacity=".75"/><rect x="72.0" y="67" width="5" height=".8" fill="#bbb"/><rect x="79.0" y="61" width="4" height="5" fill="#eef0f2" stroke="#c8c8c8" stroke-width=".4"/><rect x="79.5" y="62" width="2.2" height="2.2" fill="#6a8fc8" opacity=".75"/><rect x="78.5" y="67" width="5" height=".8" fill="#bbb"/><rect x="85.5" y="61" width="4" height="5" fill="#eef0f2" stroke="#c8c8c8" stroke-width=".4"/><rect x="86.0" y="62" width="2.2" height="2.2" fill="#c9a24a" opacity=".75"/><rect x="85.0" y="67" width="5" height=".8" fill="#bbb"/><rect x="92.0" y="61" width="4" height="5" fill="#eef0f2" stroke="#c8c8c8" stroke-width=".4"/><rect x="92.5" y="62" width="2.2" height="2.2" fill="#4a78c0" opacity=".75"/><rect x="91.5" y="67" width="5" height=".8" fill="#bbb"/><rect x="98.5" y="61" width="4" height="5" fill="#eef0f2" stroke="#c8c8c8" stroke-width=".4"/><rect x="99.0" y="62" width="2.2" height="2.2" fill="#6a8fc8" opacity=".75"/><rect x="98.0" y="67" width="5" height=".8" fill="#bbb"/>
  </svg>
</div>
<!-- thumbnail 2 -->
<div class="a" style="left:329.5px;top:467.5px;width:83.5px;height:66px;background:#fff;overflow:hidden">
 <div class="a" style="left:0;top:0;width:84px;height:3px;background:#fff"></div>
 <div class="a" style="left:0;top:3px;width:84px;height:4px;background:#f0f0f0"></div>
 <div class="a" style="left:0;top:3px;width:8px;height:4px;background:#1a73c8"></div>
 <div class="a" style="left:0;top:8px;width:84px;height:4px;background:#f7f7f7;border-bottom:1px solid #e5e5e5"></div>
 <div class="a" style="left:5px;top:46px;width:42px;height:3px;background:#ddd"></div>
 <svg style="left:0;top:0" width="84" height="66"><g fill="#9aa"><rect x="4" y="14" width="2" height="2" fill="#3a8fe0"/><rect x="8" y="14.5" width="16" height="1"/><rect x="4" y="19" width="2" height="2" fill="#3a8fe0"/><rect x="8" y="19.5" width="18" height="1"/><rect x="5" y="23" width="2" height="2" fill="#333"/><rect x="9" y="23.5" width="10" height="1"/><rect x="5" y="27" width="2" height="2" fill="#5b9bd5"/><rect x="9" y="27.5" width="12" height="1"/><rect x="5" y="31" width="2" height="2" fill="#5b9bd5"/><rect x="9" y="31.5" width="11" height="1"/><rect x="5" y="35" width="2" height="2" fill="#5b9bd5"/><rect x="9" y="35.5" width="9" height="1"/><rect x="5" y="39" width="2" height="2" fill="#5b9bd5"/><rect x="9" y="39.5" width="14" height="1"/><rect x="5" y="43" width="2" height="2" fill="#5b9bd5"/><rect x="9" y="43.5" width="13" height="1"/><rect x="5" y="47" width="2" height="2" fill="#777"/><rect x="9" y="47.5" width="14" height="1"/><rect x="5" y="51" width="2" height="2" fill="#5b9bd5"/><rect x="9" y="51.5" width="12" height="1"/><rect x="4" y="56" width="2" height="2" fill="#3a8fe0"/><rect x="8" y="56.5" width="6" height="1"/><rect x="45" y="13" width="6" height="1"/><rect x="58" y="19" width="16" height="1"/><rect x="47" y="63" width="10" height="1.5" fill="#ccc"/><rect x="4" y="63" width="14" height="1"/></g></svg>
</div>
<!-- ===== Windows taskbar ===== -->
<div class="a" style="left:0;top:539px;width:1004px;height:26px;background:#1e3339"></div>
<div class="a" style="left:31px;top:539px;width:188.5px;height:26px;background:#f2f3f3"></div>
<svg style="left:10px;top:545px" width="12" height="12"><g fill="#fff"><path d="M0.5 1.8 L5 1.2 V5.5 H0.5Z"/><path d="M5.8 1.1 L11.5 0.3 V5.5 H5.8Z"/><path d="M0.5 6.3 H5 V10.6 L0.5 10Z"/><path d="M5.8 6.3 H11.5 V11.5 L5.8 10.7Z"/></g></svg>
<svg style="left:39px;top:546px" width="12" height="12"><circle cx="7.3" cy="4.7" r="3.6" fill="none" stroke="#333" stroke-width="1.1"/><path d="M4.6 7.4 L1 11" stroke="#333" stroke-width="1.2"/></svg>
<div class="t" style="left:57px;top:546.5px;font-size:10.5px;color:#222">Поиск</div>
<svg style="left:172px;top:542px" width="44" height="22"><path d="M15 2 Q16.5 9 23 10.5 Q16.5 12 15 19 Q13.5 12 7 10.5 Q13.5 9 15 2Z" fill="#f7c325"/><path d="M25 9 Q25.7 12 28.5 12.7 Q25.7 13.4 25 16.4 Q24.3 13.4 21.5 12.7 Q24.3 12 25 9Z" fill="#f7c325"/><path d="M5 15 Q5.4 17 7.3 17.4 Q5.4 17.8 5 19.8 Q4.6 17.8 2.7 17.4 Q4.6 17 5 15Z" fill="#36a6ee"/><circle cx="27" cy="3.6" r="1.2" fill="#e55"/><circle cx="30" cy="19" r="1" fill="#7c3"/></svg>
<svg style="left:228px;top:546px" width="14" height="13"><g fill="none" stroke="#ddd" stroke-width="1"><rect x="2.5" y="2.5" width="6" height="8"/><path d="M0.5 2 V11 M11 1 V3 M11 5 V8 M11 10 V12"/></g></svg>
<!-- word -->
<div class="a" style="left:261px;top:545px;width:15px;height:14px;background:#2b579a;border-radius:1px"></div>
<div class="a" style="left:270px;top:546px;width:7px;height:12px;background:#fff;border-radius:1px"></div>
<div class="t" style="left:262px;top:548px;font-size:8px;font-weight:bold;color:#fff">W</div>
<!-- explorer highlighted -->
<div class="a" style="left:285px;top:539px;width:30px;height:26px;background:#3a4f58"></div>
<svg style="left:292px;top:544px" width="17" height="15"><path d="M0.5 2 Q0.5 1 1.5 1 H6 L7.5 2.5 H15.5 Q16.5 2.5 16.5 3.5 V13.5 Q16.5 14.5 15.5 14.5 H1.5 Q0.5 14.5 0.5 13.5Z" fill="#f4b93a"/><path d="M0.5 4.5 H16.5 V13.5 Q16.5 14.5 15.5 14.5 H1.5 Q0.5 14.5 0.5 13.5Z" fill="#fcd462"/><path d="M4.5 14.5 V9.5 H12.5 V14.5 H10.5 V11.5 H6.5 V14.5Z" fill="#2f8fe0"/></svg>
<!-- copilot -->
<svg style="left:325px;top:544px" width="16" height="16"><defs><linearGradient id="cp1" x1="0" y1="0" x2="0" y2="1"><stop offset="0" stop-color="#3aa0f0"/><stop offset="1" stop-color="#5ad07a"/></linearGradient><linearGradient id="cp2" x1="0" y1="0" x2="0" y2="1"><stop offset="0" stop-color="#c05ae0"/><stop offset="1" stop-color="#f5803a"/></linearGradient></defs><path d="M5 1.5 H9 Q10.5 1.5 10 3 L7 12.5 Q6.5 14 5 14 H3 Q1 14 1.5 12 L3.5 3 Q4 1.5 5 1.5Z" fill="url(#cp1)"/><path d="M11 2 H13 Q15 2 14.5 4 L12.5 13 Q12 14.5 11 14.5 H7 Q5.5 14.5 6 13 L9 3.5 Q9.5 2 11 2Z" fill="url(#cp2)"/></svg>
<!-- zoom highlighted -->
<div class="a" style="left:350px;top:539px;width:29px;height:26px;background:#3a4f58"></div>
<div class="a" style="left:357px;top:544px;width:16px;height:16px;background:#1266e6;border-radius:6px"></div>
<div class="t" style="left:358.5px;top:550px;font-size:4px;color:#fff">zoom</div>
<!-- chrome -->
<svg style="left:390px;top:544px" width="16" height="16"><circle cx="8" cy="8" r="7.5" fill="#db4437"/><path d="M8 8 L1.5 4.25 A7.5 7.5 0 0 0 4.25 14.5Z" fill="#0f9d58"/><path d="M8 8 L4.25 14.5 A7.5 7.5 0 0 0 15.5 8 Z" fill="#f4b400"/><circle cx="8" cy="8" r="3.6" fill="#fff"/><circle cx="8" cy="8" r="2.8" fill="#4285f4"/></svg>
<!-- webex -->
<div class="a" style="left:423px;top:544px;width:16px;height:16px;background:#0b0b0b;border-radius:4px"></div>
<svg style="left:423px;top:544px" width="16" height="16"><defs><linearGradient id="wx" x1="0" x2="1"><stop offset="0" stop-color="#2f7bf6"/><stop offset=".5" stop-color="#32c8f0"/><stop offset="1" stop-color="#7adf6a"/></linearGradient></defs><path d="M3 4.5 Q2.5 12 5.5 11.5 Q8 11 8 8 Q8 5 10.5 4.5 Q13.5 4 13 11.5" fill="none" stroke="url(#wx)" stroke-width="2.4" stroke-linecap="round"/></svg>
<!-- chrome profile -->
<svg style="left:456px;top:544px" width="18" height="18"><circle cx="8" cy="8" r="7.5" fill="#db4437"/><path d="M8 8 L1.5 4.25 A7.5 7.5 0 0 0 4.25 14.5Z" fill="#0f9d58"/><path d="M8 8 L4.25 14.5 A7.5 7.5 0 0 0 15.5 8 Z" fill="#f4b400"/><circle cx="8" cy="8" r="3.6" fill="#fff"/><circle cx="8" cy="8" r="2.8" fill="#4285f4"/><circle cx="12.5" cy="13" r="4.6" fill="#eee"/><path d="M9.5 17 Q9 11 12.5 9.5 Q16 11 15.5 17Z" fill="#222"/><ellipse cx="12.5" cy="13.3" rx="2" ry="2.4" fill="#e5c0a8"/></svg>
<!-- viber -->
<svg style="left:488px;top:543px" width="22" height="20"><path d="M9 1.5 Q16.5 1.5 16.5 8.5 Q16.5 15 9 15 L6 17.5 V14.5 Q1.5 13 1.5 8.5 Q1.5 1.5 9 1.5Z" fill="#7360f2"/><path d="M9 3 Q15 3 15 8.5 Q15 13.5 9 13.5 Q3 13.5 3 8.5 Q3 3 9 3Z" fill="#fff"/><path d="M6.5 5.5 Q6 8.5 8.5 10.5 Q10.5 12 11.5 11 L10.5 9.8 L9.3 10.2 Q7.8 9 7.5 7.5 L8.2 6.5 L7.5 5.2Z" fill="#7360f2"/><circle cx="15" cy="14.5" r="5.2" fill="#e53935"/><text x="15" y="16.6" font-size="5.5" fill="#fff" text-anchor="middle" font-family="Liberation Sans">107</text></svg>
<!-- snipping -->
<svg style="left:520px;top:543px" width="17" height="18"><circle cx="9" cy="8" r="6.5" fill="none" stroke="#e64a19" stroke-width="2"/><path d="M7 2 L10 12 M11 2 L8 12" stroke="#ccc" stroke-width="1.3"/><circle cx="6" cy="14.5" r="2.2" fill="none" stroke="#2aa0e8" stroke-width="1.2"/><circle cx="11.5" cy="14.5" r="2.2" fill="none" stroke="#2aa0e8" stroke-width="1.2"/></svg>
<!-- powerpoint -->
<div class="a" style="left:552px;top:545px;width:16px;height:14px;background:#c43e1c;border-radius:1px"></div>
<div class="a" style="left:561px;top:546px;width:8px;height:12px;background:#fff;border-radius:1px"></div>
<div class="t" style="left:554px;top:548px;font-size:8.5px;font-weight:bold;color:#fff">P</div>
<!-- underlines -->
<div class="ul" style="left:255px;width:27px"></div>
<div class="ul" style="left:286px;width:28px"></div>
<div class="ul" style="left:351px;width:28px"></div>
<div class="ul" style="left:418px;width:26px"></div>
<div class="ul" style="left:450px;width:27px"></div>
<div class="ul" style="left:483px;width:26px"></div>
<div class="ul" style="left:515px;width:27px"></div>
<div class="ul" style="left:547px;width:27px"></div>
<!-- tray -->
<svg style="left:825px;top:547px" width="10" height="7"><path d="M1 5.5 L5 1.5 L9 5.5" fill="none" stroke="#ddd" stroke-width="1.1"/></svg>
<div class="a" style="left:844px;top:545px;width:5px;height:9px;background:#ddd;border-radius:2px 2px 0 0"></div>
<div class="a" style="left:845px;top:555px;width:3px;height:3px;background:#ddd"></div>
<div class="a" style="left:855px;top:548px;width:12px;height:7px;background:#ddd;border-radius:1px"></div>
<svg style="left:872px;top:544px" width="14" height="15"><path d="M6 0.5 L11.5 2.5 V7 Q11.5 11.5 6 13.5 Q0.5 11.5 0.5 7 V2.5Z" fill="#eee"/><path d="M6 2 V12 M1.5 7 H10.5" stroke="#1e3339" stroke-width="1"/><path d="M9.5 8 L13.5 14.5 H5.5Z" fill="#f7c325"/></svg>
<svg style="left:888px;top:545px" width="14" height="12"><g fill="none" stroke="#ccc" stroke-width="1"><path d="M1 4 H3.5 L6.5 1.5 V10.5 L3.5 8 H1Z"/><path d="M8.5 4 Q9.8 6 8.5 8 M10.5 2.5 Q12.8 6 10.5 9.5"/></g></svg>
<div class="t" style="left:906px;top:547.5px;font-size:7.8px;color:#fff">УКР</div>
<div class="t" style="left:947px;top:542px;font-size:8.8px;color:#fff;transform:translateX(-50%)">10:46</div>
<div class="t" style="left:947px;top:554px;font-size:7.9px;color:#fff;transform:translateX(-50%)">05.03.2026</div>
<svg style="left:976px;top:544px" width="13" height="14"><path d="M0.5 0.5 H12.5 V9.5 H7.5 L5 12.5 L5 9.5 H0.5Z" fill="#fff"/><path d="M3 3 H10 M3 5 H10 M3 7 H8" stroke="#1e3339" stroke-width=".8"/></svg>
</body></html>
